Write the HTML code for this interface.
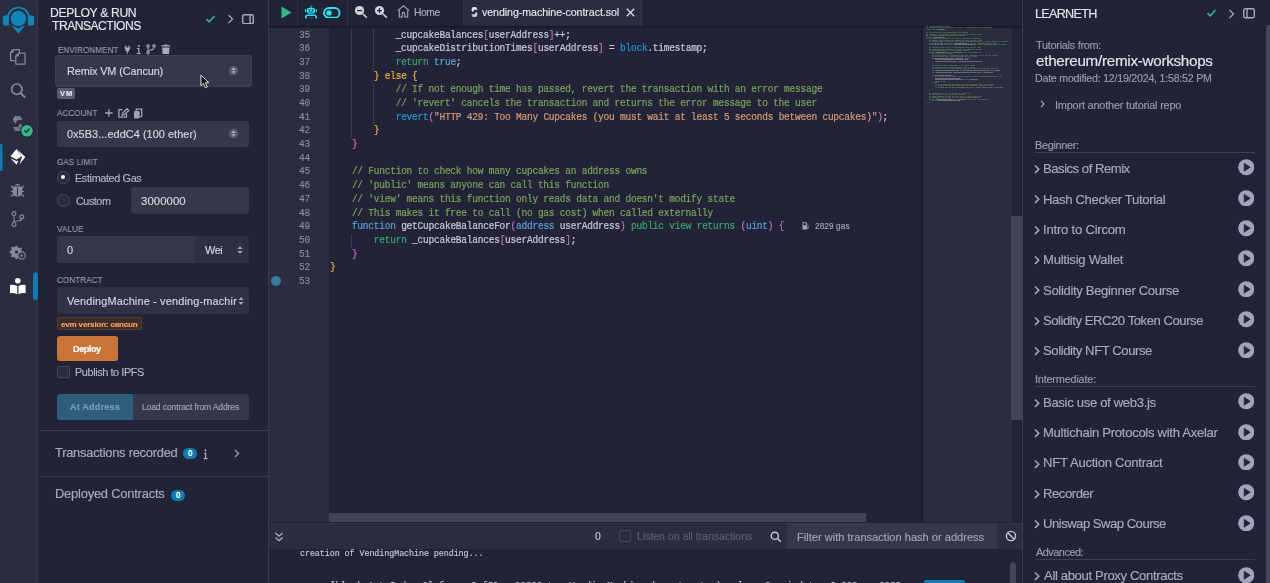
<!DOCTYPE html>
<html><head><meta charset="utf-8">
<style>
*{box-sizing:border-box;margin:0;padding:0}
html,body{width:1270px;height:583px;overflow:hidden;background:#222336;font-family:"Liberation Sans",sans-serif;color:#babbcc;-webkit-font-smoothing:antialiased}
.txt,.code,.ln{will-change:transform}
.abs{position:absolute}
#iconbar{left:0;top:0;width:38px;height:583px;background:#2a2c3f;border-right:1px solid #363a4f}
#side{left:38px;top:0;width:231px;height:583px;background:#222336;border-right:1px solid #363a4f}
#main{left:269px;top:0;width:754px;height:583px;background:#222336;border-right:1px solid #363a4f}
#right{left:1023px;top:0;width:247px;height:583px;background:#222336}
.lbl{position:absolute;font-size:9px;color:#8f90a6;letter-spacing:0.1px}
.sel{position:absolute;background:#353849;border-radius:3px;color:#dcdde6;font-size:11.5px}
.txt{position:absolute;white-space:pre;-webkit-text-stroke:0.15px currentColor}
.code{position:absolute;left:330px;font-family:"Liberation Mono",monospace;font-size:9.5px;letter-spacing:-0.23px;white-space:pre;color:#c9cad7;-webkit-text-stroke:0.2px currentColor;transform:scaleY(1.1);transform-origin:0 9.4px}
.ln{position:absolute;left:269px;width:41px;text-align:right;font-family:"Liberation Mono",monospace;font-size:9.5px;letter-spacing:-0.23px;color:#8e8fa3;transform:scaleY(1.14);transform-origin:0 9.4px;-webkit-text-stroke:0.1px currentColor}
.c{color:#7aa35c}.k{color:#3ba66b}.b{color:#5a9fd4}.p{color:#c26fc9}.y{color:#e8b339}.s{color:#d19a7a}.rv{color:#1e9ad0}
</style></head><body>
<div id="iconbar" class="abs"></div>
<div id="side" class="abs"></div>
<div id="main" class="abs"></div>
<div id="right" class="abs"></div>
<!-- ICON BAR -->
<svg class="abs" style="left:0;top:0" width="37" height="37" viewBox="0 0 37 37">
 <defs><clipPath id="shc"><path d="M0 0 H37 V23.2 L18.4 26.8 L0 23.2 Z"/></clipPath></defs>
 <g fill="#0f86b8">
  <path d="M6.74 19.32 A11.7 11.7 0 1 1 30.06 19.32 L28.06 19.15 A9.7 9.7 0 1 0 8.74 19.15 Z"/>
  <path d="M2.8 17.6 Q2.8 15.6 4.8 15.6 L8.9 15.6 L8.9 25.4 L4.8 25.4 Q2.8 25.4 2.8 23.4 Z"/>
  <path d="M27.9 15.6 L32 15.6 Q34.1 15.6 34.1 17.6 L34.1 23.4 Q34.1 25.4 32 25.4 L27.9 25.4 Z"/>
  <path d="M26.40 18.50 L25.61 19.64 L26.01 20.97 L24.90 21.81 L24.87 23.20 L23.56 23.66 L23.10 24.97 L21.71 25.00 L20.87 26.11 L19.54 25.71 L18.40 26.50 L17.26 25.71 L15.93 26.11 L15.09 25.00 L13.70 24.97 L13.24 23.66 L11.93 23.20 L11.90 21.81 L10.79 20.97 L11.19 19.64 L10.40 18.50 L11.19 17.36 L10.79 16.03 L11.90 15.19 L11.93 13.80 L13.24 13.34 L13.70 12.03 L15.09 12.00 L15.93 10.89 L17.26 11.29 L18.40 10.50 L19.54 11.29 L20.87 10.89 L21.71 12.00 L23.10 12.03 L23.56 13.34 L24.87 13.80 L24.90 15.19 L26.01 16.03 L25.61 17.36 Z" clip-path="url(#shc)"/>
  <path d="M11.2 24.9 L18.4 28.2 L25.6 24.9 L18.4 33.7 Z"/>
 </g>
</svg>
<svg class="abs" style="left:0;top:0" width="38" height="300" viewBox="0 0 38 300">
 <!-- files -->
 <g stroke="#86879a" stroke-width="1.25" fill="none" stroke-linejoin="round">
  <path d="M13 49.6 H19.4 V53 M15.6 60.5 H10.6 V52.2 L13 49.6 V52.2 H10.6"/>
  <path d="M18.2 53.2 H25 V64 H15.8 V55.8 Z M18.2 53.2 V55.8 H15.8"/>
 </g>
 <!-- search -->
 <circle cx="16.8" cy="89.2" r="5.2" stroke="#86879a" stroke-width="1.7" fill="none"/>
 <path d="M20.6 93 L24.6 97" stroke="#86879a" stroke-width="1.9" stroke-linecap="round"/>
 <!-- solidity -->
 <path d="M15.2 115.9 L20.3 115.9 L22.6 119.9 L17.6 119.9 L15.2 124 L12.9 119.9 Z" fill="#76778b"/>
 <path d="M15.2 115.9 L17.6 119.9 L12.9 119.9 Z" fill="#8a8b9e"/>
 <path d="M20.3 131 L15.2 131 L12.9 127 L17.9 127 L20.3 122.9 L22.6 127 Z" fill="#76778b"/>
 <path d="M20.3 131 L17.9 127 L22.6 127 Z" fill="#606174"/>
 <circle cx="27" cy="130.8" r="6.6" fill="#1f2030"/><circle cx="27" cy="130.8" r="5.8" fill="#32ba89"/>
 <path d="M24.4 130.4 L26.3 132.2 L29.5 128.8" stroke="#1d2233" stroke-width="1.4" fill="none"/>
 <!-- active indicator -->
 <rect x="0" y="144" width="2.5" height="27" rx="1" fill="#0e7cb0"/>
 <!-- deploy -->
 <g fill="#ffffff">
  <path d="M16.5 149 L21.5 156.5 L16.5 159.5 L10.5 156.3 Z"/>
  <path d="M17.5 149.8 L25.3 157 L19.5 164.6 L22 157 Z"/>
  <path d="M10.5 158 L16.5 161.3 L18.5 160.3 L16.5 164.8 Z"/>
 </g>
 <!-- bug -->
 <g fill="#86879a">
  <path d="M14.6 185.5 A3.4 3 0 0 1 20.4 185.5 Z"/>
  <path d="M13.6 186.6 H21.4 Q22.4 186.6 22.4 188 V192 Q22.4 196.6 17.5 196.6 Q12.6 196.6 12.6 192 V188 Q12.6 186.6 13.6 186.6Z"/>
 </g>
 <g stroke="#86879a" stroke-width="1.2">
  <path d="M11 186 L13.5 188 M24 186 L21.5 188 M10.8 191.5 H13 M24.2 191.5 H22 M11 196.5 L13.5 194.5 M24 196.5 L21.5 194.5"/>
 </g>
 <path d="M17.5 187.5 V196" stroke="#2a2c3f" stroke-width="1"/>
 <!-- git -->
 <g stroke="#86879a" stroke-width="1.2" fill="none">
  <circle cx="14" cy="213.6" r="1.9"/>
  <circle cx="14" cy="224.4" r="1.9"/>
  <circle cx="21.8" cy="216.7" r="1.9"/>
  <path d="M14 215.5 V222.5 M21.8 218.6 Q21.8 221 17.5 221 L14 221.5"/>
 </g>
 <!-- gear play -->
 <g fill="#86879a">
  <path d="M15.5 246 h2 l0.4 1.6 1.4 0.6 1.4-0.9 1.4 1.4 -0.9 1.4 0.6 1.4 1.6 0.4 v1.2 A4.5 4.5 0 0 0 19.5 256.6 l-0.2 0.1 -1.4 0.6 -0.4 1.6 h-2 l-0.4-1.6 -1.4-0.6 -1.4 0.9 -1.4-1.4 0.9-1.4 -0.6-1.4 -1.6-0.4 v-2 l1.6-0.4 0.6-1.4 -0.9-1.4 1.4-1.4 1.4 0.9 1.4-0.6z"/>
 </g>
 <circle cx="16.5" cy="252" r="1.6" fill="#2a2c3f"/>
 <circle cx="21.6" cy="255.5" r="3.6" stroke="#86879a" stroke-width="1.2" fill="#2a2c3f"/>
 <path d="M20.6 253.7 L23.4 255.5 L20.6 257.3 Z" fill="#86879a"/>
 <!-- book -->
 <g fill="#ffffff">
  <circle cx="17.8" cy="280.8" r="2.8"/>
  <path d="M10 285 Q13.5 284 17.2 286 V294.2 Q13.5 292.5 10 293.2 Z"/>
  <path d="M25.6 285 Q22 284 18.4 286 V294.2 Q22 292.5 25.6 293.2 Z"/>
 </g>
 <rect x="33" y="272.3" width="5" height="27.7" rx="2.3" fill="#0e7cb0"/>
</svg>

<!-- SIDE PANEL -->
<svg class="abs" style="left:204.6px;top:14px" width="11" height="10" viewBox="0 0 11 10"><path d="M1.5 5.2 L4.2 7.8 L9.5 2" stroke="#32ba89" stroke-width="1.6" fill="none"/></svg>
<svg class="abs" style="left:226.6px;top:13.6px" width="7" height="10" viewBox="0 0 7 10"><path d="M1.5 1 L5.5 5 L1.5 9" stroke="#a2a3bd" stroke-width="1.3" fill="none"/></svg>
<svg class="abs" style="left:241.6px;top:13.5px" width="12" height="10.5" viewBox="0 0 12 10.5"><rect x="0.7" y="0.7" width="10.6" height="9.1" rx="1.6" stroke="#a9aac2" stroke-width="1.4" fill="none"/><line x1="8.1" y1="1" x2="8.1" y2="9.5" stroke="#a9aac2" stroke-width="1.4"/></svg>

<svg class="abs" style="left:124px;top:44px" width="50" height="11" viewBox="0 0 50 11"><g fill="#a9aac2"><rect x="1.1" y="1.6" width="1.2" height="2.2"/><rect x="4.3" y="1.6" width="1.2" height="2.2"/><path d="M0.3 3.6 H6.6 L4.5 7.8 H2.4 Z"/><rect x="2.9" y="7.6" width="0.9" height="2.2"/><circle cx="14.8" cy="2" r="1"/></g><path d="M12.9 4.5 H14.8 V9.3 M12.7 9.5 H16.9" stroke="#a9aac2" stroke-width="1.2" fill="none"/><g stroke="#a9aac2" stroke-width="1.05" fill="none"><circle cx="24.1" cy="2.1" r="1.25"/><circle cx="30" cy="2.1" r="1.25"/><circle cx="24.1" cy="8.6" r="1.25"/><path d="M24.1 3.4 V7.3 M30 3.4 Q30 6 25 6.2"/></g><g fill="#a9aac2"><path d="M37.4 1.3 H46.2 V2.5 H37.4 Z M40.3 0.5 H43.3 V1.4 H40.3 Z M38.1 3.4 H45.5 L45 10 H38.6 Z"/></g></svg>
<div class="sel" style="left:55px;top:55.4px;width:196.5px;height:31.4px;border:1px solid #3e4155;background:#363849"></div>
<svg class="abs" style="left:228.1px;top:65.2px" width="11.2" height="11.2" viewBox="0 0 11.2 11.2"><circle cx="5.6" cy="5.6" r="5" fill="#585b76" stroke="#2f3246" stroke-width="0.6"/><path d="M3.5 4.9 L5.6 2.6 L7.7 4.9 Z M3.5 6.3 L5.6 8.6 L7.7 6.3 Z" fill="#b3b5cf"/></svg>
<div class="abs" style="left:57px;top:87.8px;width:18px;height:10.8px;background:#595c76;border-radius:2px"></div>

<svg class="abs" style="left:104px;top:108px" width="40" height="11" viewBox="0 0 40 11"><g stroke="#a2a3bd" stroke-width="1.3" fill="none"><path d="M4.9 1.2v7.6 M1.1 5h7.6"/><path d="M22.5 5.8v3.4h-7.6v-7.6h3.6"/><path d="M18.2 7.2l0.5-2.2 4.3-4.3 1.7 1.7-4.3 4.3z"/></g><g fill="#a2a3bd"><rect x="30" y="3" width="5.6" height="7.4" rx="1"/></g><path d="M32.3 2.8V1.2h5.4v7.4h-1.8" stroke="#a2a3bd" stroke-width="1.3" fill="none"/></svg>
<div class="sel" style="left:57px;top:121px;width:192px;height:26px;background:#353849"></div>
<svg class="abs" style="left:228.3px;top:127.9px" width="11.2" height="11.2" viewBox="0 0 11.2 11.2"><circle cx="5.6" cy="5.6" r="5" fill="#585b76" stroke="#2f3246" stroke-width="0.6"/><path d="M3.5 4.9 L5.6 2.6 L7.7 4.9 Z M3.5 6.3 L5.6 8.6 L7.7 6.3 Z" fill="#b3b5cf"/></svg>

<div class="abs" style="left:57px;top:171px;width:12.5px;height:12.5px;border-radius:50%;border:1px solid #44465c;background:#292b3e"></div>
<div class="abs" style="left:61.2px;top:175.2px;width:4.2px;height:4.2px;border-radius:50%;background:#fff"></div>
<div class="abs" style="left:57px;top:194px;width:12.5px;height:12.5px;border-radius:50%;border:1px solid #44465c;background:#292b3e"></div>
<div class="sel" style="left:131px;top:187px;width:118px;height:27px"></div>

<div class="sel" style="left:57px;top:236px;width:138px;height:27px;border-radius:3px 0 0 3px"></div>
<div class="sel" style="left:195px;top:236px;width:54px;height:27px;border-radius:0 3px 3px 0;background:#2d2f42"></div>
<svg class="abs" style="left:237px;top:245px" width="6" height="10" viewBox="0 0 6 10"><path d="M0.5 4L3 1 5.5 4z M0.5 6L3 9 5.5 6z" fill="#a2a3bd"/></svg>

<div class="sel" style="left:57px;top:287px;width:192px;height:27px;background:#2f3145"></div>

<div class="abs" style="left:57px;top:317px;width:85px;height:13px;background:#3f2d2c;border:1px solid #5a3a30;border-radius:2px"></div>
<div class="abs" style="left:57px;top:336px;width:61px;height:24.5px;background:#c97539;border-radius:3px"></div>
<div class="abs" style="left:57px;top:365.5px;width:12.5px;height:12.5px;border-radius:2px;border:1px solid #44465c;background:#2a2c3f"></div>

<div class="abs" style="left:57px;top:394px;width:76px;height:25.5px;background:#2f5e7a;border-radius:3px 0 0 3px"></div>
<div class="abs" style="left:133px;top:394px;width:116px;height:25.5px;background:#353849;border-radius:0 3px 3px 0"></div>

<div class="abs" style="left:39px;top:430px;width:229px;height:1px;background:#363a4f"></div>
<div class="abs" style="left:183px;top:448px;width:14px;height:11px;border-radius:6px;background:#0e7cb0;color:#fff;font-size:8.5px;font-weight:bold;text-align:center;line-height:11.5px">0</div>
<svg class="abs" style="left:203px;top:449px" width="5" height="10.5" viewBox="0 0 5 10.5"><circle cx="2.5" cy="1.2" r="1" fill="#a9aac2"/><path d="M1.1 4.2 H2.6 V9.3 M0.5 9.6 H4.5" stroke="#a9aac2" stroke-width="1.25" fill="none"/></svg>
<svg class="abs" style="left:234px;top:449px" width="6" height="9" viewBox="0 0 6 9"><path d="M1 1 L4.5 4.5 L1 8" stroke="#a2a3bd" stroke-width="1.2" fill="none"/></svg>
<div class="abs" style="left:39px;top:476px;width:229px;height:1px;background:#363a4f"></div>
<div class="abs" style="left:171px;top:489.5px;width:14px;height:11px;border-radius:6px;background:#0e7cb0;color:#fff;font-size:8.5px;font-weight:bold;text-align:center;line-height:11.5px">0</div>

<div class="txt" style="left:49.90px;top:6.50px;font-size:12.2px;line-height:12.2px;color:#e4e5ed;letter-spacing:-0.355px">DEPLOY &amp; RUN</div>
<div class="txt" style="left:51.70px;top:19.90px;font-size:12.2px;line-height:12.2px;color:#e4e5ed;letter-spacing:-0.555px">TRANSACTIONS</div>
<div class="txt" style="left:57.60px;top:46.00px;font-size:8.6px;line-height:8.6px;color:#9a9bb0;letter-spacing:0.150px;transform:scaleX(0.9277);transform-origin:0.00px 0">ENVIRONMENT</div>
<div class="txt" style="left:66.80px;top:65.80px;font-size:10.9px;line-height:10.9px;color:#d6d7e2;letter-spacing:-0.113px">Remix VM (Cancun)</div>
<div class="txt" style="left:60.30px;top:90.20px;font-size:7.5px;line-height:7.5px;color:#e8e8f0;font-weight:700;letter-spacing:1.000px">VM</div>
<div class="txt" style="left:57.40px;top:109.00px;font-size:8.6px;line-height:8.6px;color:#9a9bb0;letter-spacing:0.150px;transform:scaleX(0.9295);transform-origin:0.00px 0">ACCOUNT</div>
<div class="txt" style="left:67.40px;top:129.20px;font-size:10.9px;line-height:10.9px;color:#d6d7e2;letter-spacing:0.058px">0x5B3...eddC4 (100 ether)</div>
<div class="txt" style="left:57.10px;top:157.60px;font-size:8.6px;line-height:8.6px;color:#9a9bb0;letter-spacing:0.150px;transform:scaleX(0.9295);transform-origin:0.00px 0">GAS LIMIT</div>
<div class="txt" style="left:74.70px;top:172.50px;font-size:10.8px;line-height:10.8px;color:#b4b5c7;letter-spacing:-0.342px">Estimated Gas</div>
<div class="txt" style="left:75.70px;top:196.10px;font-size:10.8px;line-height:10.8px;color:#b4b5c7;letter-spacing:-0.460px">Custom</div>
<div class="txt" style="left:140.60px;top:196.10px;font-size:11.4px;line-height:11.4px;color:#d6d7e2;letter-spacing:0.050px">3000000</div>
<div class="txt" style="left:57.10px;top:224.50px;font-size:8.6px;line-height:8.6px;color:#9a9bb0;letter-spacing:0.150px;transform:scaleX(0.9393);transform-origin:0.00px 0">VALUE</div>
<div class="txt" style="left:66.50px;top:244.60px;font-size:10.9px;line-height:10.9px;color:#d6d7e2">0</div>
<div class="txt" style="left:205.10px;top:244.60px;font-size:10.9px;line-height:10.9px;color:#d6d7e2;letter-spacing:-0.450px">Wei</div>
<div class="txt" style="left:57.10px;top:275.90px;font-size:8.6px;line-height:8.6px;color:#9a9bb0;letter-spacing:0.150px;transform:scaleX(0.9327);transform-origin:0.00px 0">CONTRACT</div>
<div class="txt" style="left:61.00px;top:320.70px;font-size:8.0px;line-height:8.0px;color:#eea06a;font-weight:700;letter-spacing:-0.161px">evm version: cancun</div>
<div class="txt" style="left:73.30px;top:344.50px;font-size:9.2px;line-height:9.2px;color:#ffffff;font-weight:700;letter-spacing:-0.500px">Deploy</div>
<div class="txt" style="left:74.60px;top:366.60px;font-size:10.9px;line-height:10.9px;color:#b4b5c7;letter-spacing:-0.414px">Publish to IPFS</div>
<div class="txt" style="left:70.40px;top:403.40px;font-size:9.0px;line-height:9.0px;color:#7d9fb6;font-weight:700;letter-spacing:0.233px">At Address</div>
<div class="txt" style="left:142.40px;top:403.40px;font-size:8.5px;line-height:8.5px;color:#a3a4b8;letter-spacing:-0.104px">Load contract from Addres</div>
<div class="txt" style="left:55.00px;top:447.10px;font-size:12.9px;line-height:12.9px;color:#a9aabe;letter-spacing:-0.250px">Transactions recorded</div>
<div class="txt" style="left:55.00px;top:488.30px;font-size:12.9px;line-height:12.9px;color:#a9aabe;letter-spacing:-0.206px">Deployed Contracts</div>
<div class="txt" style="left:67.30px;top:295.60px;font-size:10.9px;line-height:10.9px;color:#d6d7e2;letter-spacing:0.170px">VendingMachine - vending-machin</div>
<div class="abs" style="left:237px;top:288px;width:12px;height:25px;background:#2f3145;border-radius:0 3px 3px 0"></div>
<svg class="abs" style="left:237.5px;top:296px" width="6" height="10" viewBox="0 0 6 10"><path d="M0.5 4L3 1 5.5 4z M0.5 6L3 9 5.5 6z" fill="#a2a3bd"/></svg>
<svg class="abs" style="left:200.2px;top:74px" width="11" height="15" viewBox="0 0 12 16"><path d="M1 1 L1 12.6 L3.7 10.1 L5.8 14.8 L7.9 13.9 L5.9 9.3 L9.6 9.3 Z" fill="#111" stroke="#f2f2f2" stroke-width="1" stroke-linejoin="round"/></svg>

<!-- MAIN: tab bar -->
<div class="abs" style="left:269px;top:0;width:753px;height:27px;background:#212233;border-bottom:1px solid #161722"></div>
<svg class="abs" style="left:281px;top:6px" width="11" height="13" viewBox="0 0 11 13"><path d="M0.5 0.5 L10.5 6.5 L0.5 12.5 Z" fill="#32ba89"/></svg>
<div class="abs" style="left:297px;top:0;width:1px;height:26px;background:#2e3043"></div>
<svg class="abs" style="left:304px;top:5px" width="14" height="14" viewBox="0 0 14 14"><g fill="#2ae0f2"><rect x="6.5" y="0.6" width="1" height="2.4"/><rect x="2.8" y="2.7" width="8.4" height="6" rx="2.4"/><rect x="1" y="4.2" width="1.2" height="3"/><rect x="11.8" y="4.2" width="1.2" height="3"/></g><g fill="#222336"><rect x="4.6" y="4.4" width="1.6" height="1.3"/><rect x="7.8" y="4.4" width="1.6" height="1.3"/><rect x="4.8" y="6.6" width="4.4" height="0.8"/></g><path d="M1.8 13.6 V12 Q1.8 10.2 3.8 10.2 H10.2 Q12.2 10.2 12.2 12 V13.6" stroke="#2ae0f2" stroke-width="1.6" fill="none"/><rect x="5" y="12.4" width="4" height="1" fill="#3a5a70"/></svg>
<svg class="abs" style="left:323.3px;top:6.6px" width="17.6" height="11.8" viewBox="0 0 17.6 11.8"><rect x="1" y="1" width="15.6" height="9.8" rx="4.9" stroke="#2ae0f2" stroke-width="1.9" fill="none"/><circle cx="6" cy="5.9" r="2.7" fill="#2ae0f2"/></svg>
<div class="abs" style="left:347px;top:0;width:1px;height:26px;background:#2e3043"></div>
<svg class="abs" style="left:354px;top:5.3px" width="14" height="14" viewBox="0 0 14 14"><circle cx="5.5" cy="5.5" r="4.6" fill="#d2d3de"/><rect x="3" y="5" width="5" height="1.2" fill="#222336"/><path d="M8.8 8.8 L12.8 12.8" stroke="#d2d3de" stroke-width="1.6"/></svg>
<svg class="abs" style="left:374px;top:5.3px" width="14" height="14" viewBox="0 0 14 14"><circle cx="5.5" cy="5.5" r="4.6" fill="#d2d3de"/><rect x="3" y="5" width="5" height="1.2" fill="#222336"/><rect x="4.9" y="3" width="1.2" height="5" fill="#222336"/><path d="M8.8 8.8 L12.8 12.8" stroke="#d2d3de" stroke-width="1.6"/></svg>
<svg class="abs" style="left:397px;top:5px" width="13" height="13" viewBox="0 0 13 13"><path d="M0.8 5.6 L6.5 0.8 L12.2 5.6" stroke="#a9aabe" stroke-width="1.1" fill="none"/><path d="M2.3 5.2 V12 H5.2 V8.6 Q5.2 7.4 6.5 7.4 Q7.8 7.4 7.8 8.6 V12 H10.7 V5.2" stroke="#a9aabe" stroke-width="1.1" fill="none"/></svg>
<div class="abs" style="left:463px;top:0;width:179px;height:26px;background:#2a2c3f;border-left:1px solid #30334a;border-right:1px solid #33374c"></div>
<svg class="abs" style="left:470.5px;top:7.4px" width="7" height="10" viewBox="0 0 9.8 15.2"><path d="M2.3 0 L7.4 0 L9.7 4 L4.7 4 L2.3 8.1 L0 4 Z" fill="#e0e1ea"/><path d="M7.4 15.1 L2.3 15.1 L0 11.1 L5 11.1 L7.4 7 L9.7 11.1 Z" fill="#c8c9d6"/></svg>
<svg class="abs" style="left:626px;top:8px" width="9" height="9" viewBox="0 0 9 9"><path d="M0.8 0.8 L8.2 8.2 M8.2 0.8 L0.8 8.2" stroke="#d6d7e0" stroke-width="1.4"/></svg>

<!-- gutter -->
<div class="abs" style="left:269px;top:27px;width:60.3px;height:496px;background:#2a2c3f"></div>
<div class="abs" style="left:351px;top:27px;width:1px;height:111px;background:#393b50"></div>
<div class="abs" style="left:351px;top:234px;width:1px;height:13.7px;background:#393b50"></div>
<div class="abs" style="left:373px;top:27px;width:1px;height:42.6px;background:#393b50"></div>
<div class="abs" style="left:373px;top:83.3px;width:1px;height:41px;background:#393b50"></div>
<div class="abs" style="left:271px;top:276px;width:10px;height:10px;border-radius:50%;background:#3a7a9a"></div>

<div class="ln" style="top:28.55px;line-height:13.69px">35</div>
<div class="code" style="top:28.55px;line-height:13.69px">            _cupcakeBalances<span class="p">[</span>userAddress<span class="p">]</span>++;</div>
<div class="ln" style="top:42.24px;line-height:13.69px">36</div>
<div class="code" style="top:42.24px;line-height:13.69px">            _cupcakeDistributionTimes<span class="p">[</span>userAddress<span class="p">]</span> = <span class="rv">block</span>.timestamp;</div>
<div class="ln" style="top:55.93px;line-height:13.69px">37</div>
<div class="code" style="top:55.93px;line-height:13.69px">            <span class="k">return</span> <span class="b">true</span>;</div>
<div class="ln" style="top:69.62px;line-height:13.69px">38</div>
<div class="code" style="top:69.62px;line-height:13.69px">        <span class="y">} else {</span></div>
<div class="ln" style="top:83.31px;line-height:13.69px">39</div>
<div class="code" style="top:83.31px;line-height:13.69px">            <span class="c">// If not enough time has passed, revert the transaction with an error message</span></div>
<div class="ln" style="top:97.00px;line-height:13.69px">40</div>
<div class="code" style="top:97.00px;line-height:13.69px">            <span class="c">// 'revert' cancels the transaction and returns the error message to the user</span></div>
<div class="ln" style="top:110.69px;line-height:13.69px">41</div>
<div class="code" style="top:110.69px;line-height:13.69px">            <span class="rv">revert</span><span class="p">(</span><span class="s">"HTTP 429: Too Many Cupcakes (you must wait at least 5 seconds between cupcakes)"</span><span class="p">)</span>;</div>
<div class="ln" style="top:124.38px;line-height:13.69px">42</div>
<div class="code" style="top:124.38px;line-height:13.69px">        <span class="y">}</span></div>
<div class="ln" style="top:138.07px;line-height:13.69px">43</div>
<div class="code" style="top:138.07px;line-height:13.69px">    <span class="p">}</span></div>
<div class="ln" style="top:151.76px;line-height:13.69px">44</div>
<div class="ln" style="top:165.45px;line-height:13.69px">45</div>
<div class="code" style="top:165.45px;line-height:13.69px">    <span class="c">// Function to check how many cupcakes an address owns</span></div>
<div class="ln" style="top:179.14px;line-height:13.69px">46</div>
<div class="code" style="top:179.14px;line-height:13.69px">    <span class="c">// 'public' means anyone can call this function</span></div>
<div class="ln" style="top:192.83px;line-height:13.69px">47</div>
<div class="code" style="top:192.83px;line-height:13.69px">    <span class="c">// 'view' means this function only reads data and doesn't modify state</span></div>
<div class="ln" style="top:206.52px;line-height:13.69px">48</div>
<div class="code" style="top:206.52px;line-height:13.69px">    <span class="c">// This makes it free to call (no gas cost) when called externally</span></div>
<div class="ln" style="top:220.21px;line-height:13.69px">49</div>
<div class="code" style="top:220.21px;line-height:13.69px">    <span class="b">function</span> getCupcakeBalanceFor<span class="p">(</span><span class="b">address</span> userAddress<span class="p">)</span> <span class="k">public</span> <span class="k">view</span> <span class="k">returns</span> <span class="p">(</span><span class="b">uint</span><span class="p">)</span> <span class="p">{</span></div>
<div class="ln" style="top:233.90px;line-height:13.69px">50</div>
<div class="code" style="top:233.90px;line-height:13.69px">        <span class="k">return</span> _cupcakeBalances<span class="p">[</span>userAddress<span class="p">]</span>;</div>
<div class="ln" style="top:247.59px;line-height:13.69px">51</div>
<div class="code" style="top:247.59px;line-height:13.69px">    <span class="p">}</span></div>
<div class="ln" style="top:261.28px;line-height:13.69px">52</div>
<div class="code" style="top:261.28px;line-height:13.69px"><span class="y">}</span></div>
<div class="ln" style="top:274.97px;line-height:13.69px">53</div>
<svg class="abs" style="left:802px;top:222px" width="7" height="8" viewBox="0 0 7 8"><path d="M0.5 7.5V1a0.7 0.7 0 0 1 0.7-0.7h3a0.7 0.7 0 0 1 0.7 0.7v6.5z" fill="#a2a3bd"/><rect x="1.3" y="1.2" width="2.7" height="2" fill="#222336"/><path d="M4.9 2.5 L6.3 3.6 V6.2 a0.5 0.5 0 0 1 -1 0 V4.8" stroke="#a2a3bd" stroke-width="0.7" fill="none"/></svg>

<div class="abs" style="left:922px;top:27px;width:89px;height:496px;background:#2a2c3f"></div>
<div class="abs" style="left:921px;top:27px;width:1.6px;height:496px;background:#1a1b27"></div>
<div class="abs" style="left:1011px;top:27px;width:12px;height:496px;background:#222336;border-left:1px solid #2c2f43;border-right:1px solid #363a4f"></div>
<div class="abs" style="left:1011px;top:215.5px;width:12px;height:204px;background:#434556"></div>
<div class="abs" style="left:329.3px;top:513px;width:536.7px;height:9px;background:#434556"></div>

<div class="abs" style="left:269px;top:27px;width:753px;height:2px;background:linear-gradient(#15162180,#15162100)"></div>

<div class="abs" style="left:926.30px;top:25.90px;width:1.50px;height:1px;background:#7aa35c;opacity:0.38"></div>
<div class="abs" style="left:928.55px;top:25.90px;width:18.00px;height:1px;background:#7aa35c;opacity:0.38"></div>
<div class="abs" style="left:947.30px;top:25.90px;width:2.25px;height:1px;background:#7aa35c;opacity:0.38"></div>
<div class="abs" style="left:926.30px;top:27.42px;width:1.50px;height:1px;background:#7aa35c;opacity:0.38"></div>
<div class="abs" style="left:928.55px;top:27.42px;width:6.00px;height:1px;background:#7aa35c;opacity:0.38"></div>
<div class="abs" style="left:935.30px;top:27.42px;width:5.25px;height:1px;background:#7aa35c;opacity:0.38"></div>
<div class="abs" style="left:941.30px;top:27.42px;width:3.00px;height:1px;background:#7aa35c;opacity:0.38"></div>
<div class="abs" style="left:945.05px;top:27.42px;width:1.50px;height:1px;background:#7aa35c;opacity:0.38"></div>
<div class="abs" style="left:947.30px;top:27.42px;width:5.25px;height:1px;background:#7aa35c;opacity:0.38"></div>
<div class="abs" style="left:953.30px;top:27.42px;width:3.00px;height:1px;background:#7aa35c;opacity:0.38"></div>
<div class="abs" style="left:957.05px;top:27.42px;width:1.50px;height:1px;background:#7aa35c;opacity:0.38"></div>
<div class="abs" style="left:959.30px;top:27.42px;width:3.75px;height:1px;background:#7aa35c;opacity:0.38"></div>
<div class="abs" style="left:963.80px;top:27.42px;width:1.50px;height:1px;background:#7aa35c;opacity:0.38"></div>
<div class="abs" style="left:966.05px;top:27.42px;width:4.50px;height:1px;background:#7aa35c;opacity:0.38"></div>
<div class="abs" style="left:971.30px;top:27.42px;width:2.25px;height:1px;background:#7aa35c;opacity:0.38"></div>
<div class="abs" style="left:974.30px;top:27.42px;width:3.00px;height:1px;background:#7aa35c;opacity:0.38"></div>
<div class="abs" style="left:978.05px;top:27.42px;width:3.00px;height:1px;background:#7aa35c;opacity:0.38"></div>
<div class="abs" style="left:981.80px;top:27.42px;width:3.75px;height:1px;background:#7aa35c;opacity:0.38"></div>
<div class="abs" style="left:986.30px;top:27.42px;width:2.25px;height:1px;background:#7aa35c;opacity:0.38"></div>
<div class="abs" style="left:989.30px;top:27.42px;width:3.00px;height:1px;background:#7aa35c;opacity:0.38"></div>
<div class="abs" style="left:926.30px;top:28.94px;width:4.50px;height:1px;background:#5a9fd4;opacity:0.38"></div>
<div class="abs" style="left:931.55px;top:28.94px;width:6.00px;height:1px;background:#5a9fd4;opacity:0.38"></div>
<div class="abs" style="left:938.30px;top:28.94px;width:0.75px;height:1px;background:#c9cad7;opacity:0.38"></div>
<div class="abs" style="left:939.05px;top:28.94px;width:0.75px;height:1px;background:#c9cad7;opacity:0.38"></div>
<div class="abs" style="left:939.80px;top:28.94px;width:0.75px;height:1px;background:#c9cad7;opacity:0.38"></div>
<div class="abs" style="left:940.55px;top:28.94px;width:0.75px;height:1px;background:#c9cad7;opacity:0.38"></div>
<div class="abs" style="left:941.30px;top:28.94px;width:0.75px;height:1px;background:#c9cad7;opacity:0.38"></div>
<div class="abs" style="left:942.05px;top:28.94px;width:0.75px;height:1px;background:#c9cad7;opacity:0.38"></div>
<div class="abs" style="left:942.80px;top:28.94px;width:0.75px;height:1px;background:#c9cad7;opacity:0.38"></div>
<div class="abs" style="left:943.55px;top:28.94px;width:0.75px;height:1px;background:#c9cad7;opacity:0.38"></div>
<div class="abs" style="left:926.30px;top:31.98px;width:1.50px;height:1px;background:#7aa35c;opacity:0.38"></div>
<div class="abs" style="left:928.55px;top:31.98px;width:5.25px;height:1px;background:#7aa35c;opacity:0.38"></div>
<div class="abs" style="left:934.55px;top:31.98px;width:0.75px;height:1px;background:#7aa35c;opacity:0.38"></div>
<div class="abs" style="left:936.05px;top:31.98px;width:6.00px;height:1px;background:#7aa35c;opacity:0.38"></div>
<div class="abs" style="left:942.80px;top:31.98px;width:3.75px;height:1px;background:#7aa35c;opacity:0.38"></div>
<div class="abs" style="left:947.30px;top:31.98px;width:10.50px;height:1px;background:#7aa35c;opacity:0.38"></div>
<div class="abs" style="left:958.55px;top:31.98px;width:2.25px;height:1px;background:#7aa35c;opacity:0.38"></div>
<div class="abs" style="left:961.55px;top:31.98px;width:6.00px;height:1px;background:#7aa35c;opacity:0.38"></div>
<div class="abs" style="left:926.30px;top:33.50px;width:1.50px;height:1px;background:#7aa35c;opacity:0.38"></div>
<div class="abs" style="left:928.55px;top:33.50px;width:0.75px;height:1px;background:#7aa35c;opacity:0.38"></div>
<div class="abs" style="left:930.05px;top:33.50px;width:6.00px;height:1px;background:#7aa35c;opacity:0.38"></div>
<div class="abs" style="left:936.80px;top:33.50px;width:1.50px;height:1px;background:#7aa35c;opacity:0.38"></div>
<div class="abs" style="left:939.05px;top:33.50px;width:0.75px;height:1px;background:#7aa35c;opacity:0.38"></div>
<div class="abs" style="left:940.55px;top:33.50px;width:7.50px;height:1px;background:#7aa35c;opacity:0.38"></div>
<div class="abs" style="left:948.80px;top:33.50px;width:1.50px;height:1px;background:#7aa35c;opacity:0.38"></div>
<div class="abs" style="left:951.05px;top:33.50px;width:6.75px;height:1px;background:#7aa35c;opacity:0.38"></div>
<div class="abs" style="left:958.55px;top:33.50px;width:2.25px;height:1px;background:#7aa35c;opacity:0.38"></div>
<div class="abs" style="left:961.55px;top:33.50px;width:3.00px;height:1px;background:#7aa35c;opacity:0.38"></div>
<div class="abs" style="left:965.30px;top:33.50px;width:3.00px;height:1px;background:#7aa35c;opacity:0.38"></div>
<div class="abs" style="left:969.05px;top:33.50px;width:4.50px;height:1px;background:#7aa35c;opacity:0.38"></div>
<div class="abs" style="left:974.30px;top:33.50px;width:3.00px;height:1px;background:#7aa35c;opacity:0.38"></div>
<div class="abs" style="left:978.05px;top:33.50px;width:3.75px;height:1px;background:#7aa35c;opacity:0.38"></div>
<div class="abs" style="left:926.30px;top:35.02px;width:1.50px;height:1px;background:#7aa35c;opacity:0.38"></div>
<div class="abs" style="left:928.55px;top:35.02px;width:1.50px;height:1px;background:#7aa35c;opacity:0.38"></div>
<div class="abs" style="left:930.80px;top:35.02px;width:0.75px;height:1px;background:#7aa35c;opacity:0.38"></div>
<div class="abs" style="left:932.30px;top:35.02px;width:6.00px;height:1px;background:#7aa35c;opacity:0.38"></div>
<div class="abs" style="left:939.05px;top:35.02px;width:5.25px;height:1px;background:#7aa35c;opacity:0.38"></div>
<div class="abs" style="left:945.05px;top:35.02px;width:1.50px;height:1px;background:#7aa35c;opacity:0.38"></div>
<div class="abs" style="left:947.30px;top:35.02px;width:2.25px;height:1px;background:#7aa35c;opacity:0.38"></div>
<div class="abs" style="left:950.30px;top:35.02px;width:6.00px;height:1px;background:#7aa35c;opacity:0.38"></div>
<div class="abs" style="left:957.05px;top:35.02px;width:7.50px;height:1px;background:#7aa35c;opacity:0.38"></div>
<div class="abs" style="left:926.30px;top:36.54px;width:6.00px;height:1px;background:#5a9fd4;opacity:0.38"></div>
<div class="abs" style="left:933.05px;top:36.54px;width:10.50px;height:1px;background:#c9cad7;opacity:0.38"></div>
<div class="abs" style="left:944.30px;top:36.54px;width:0.75px;height:1px;background:#c26fc9;opacity:0.38"></div>
<div class="abs" style="left:929.30px;top:38.06px;width:1.50px;height:1px;background:#7aa35c;opacity:0.38"></div>
<div class="abs" style="left:931.55px;top:38.06px;width:5.25px;height:1px;background:#7aa35c;opacity:0.38"></div>
<div class="abs" style="left:937.55px;top:38.06px;width:3.75px;height:1px;background:#7aa35c;opacity:0.38"></div>
<div class="abs" style="left:942.05px;top:38.06px;width:6.75px;height:1px;background:#7aa35c;opacity:0.38"></div>
<div class="abs" style="left:949.55px;top:38.06px;width:1.50px;height:1px;background:#7aa35c;opacity:0.38"></div>
<div class="abs" style="left:951.80px;top:38.06px;width:2.25px;height:1px;background:#7aa35c;opacity:0.38"></div>
<div class="abs" style="left:954.80px;top:38.06px;width:6.00px;height:1px;background:#7aa35c;opacity:0.38"></div>
<div class="abs" style="left:961.55px;top:38.06px;width:3.00px;height:1px;background:#7aa35c;opacity:0.38"></div>
<div class="abs" style="left:965.30px;top:38.06px;width:6.00px;height:1px;background:#7aa35c;opacity:0.38"></div>
<div class="abs" style="left:972.05px;top:38.06px;width:1.50px;height:1px;background:#7aa35c;opacity:0.38"></div>
<div class="abs" style="left:974.30px;top:38.06px;width:6.75px;height:1px;background:#7aa35c;opacity:0.38"></div>
<div class="abs" style="left:929.30px;top:39.58px;width:1.50px;height:1px;background:#7aa35c;opacity:0.38"></div>
<div class="abs" style="left:931.55px;top:39.58px;width:6.75px;height:1px;background:#7aa35c;opacity:0.38"></div>
<div class="abs" style="left:939.05px;top:39.58px;width:3.75px;height:1px;background:#7aa35c;opacity:0.38"></div>
<div class="abs" style="left:943.55px;top:39.58px;width:3.00px;height:1px;background:#7aa35c;opacity:0.38"></div>
<div class="abs" style="left:947.30px;top:39.58px;width:3.00px;height:1px;background:#7aa35c;opacity:0.38"></div>
<div class="abs" style="left:951.05px;top:39.58px;width:3.00px;height:1px;background:#7aa35c;opacity:0.38"></div>
<div class="abs" style="left:954.80px;top:39.58px;width:6.00px;height:1px;background:#7aa35c;opacity:0.38"></div>
<div class="abs" style="left:961.55px;top:39.58px;width:2.25px;height:1px;background:#7aa35c;opacity:0.38"></div>
<div class="abs" style="left:964.55px;top:39.58px;width:4.50px;height:1px;background:#7aa35c;opacity:0.38"></div>
<div class="abs" style="left:969.80px;top:39.58px;width:2.25px;height:1px;background:#7aa35c;opacity:0.38"></div>
<div class="abs" style="left:972.80px;top:39.58px;width:3.00px;height:1px;background:#7aa35c;opacity:0.38"></div>
<div class="abs" style="left:976.55px;top:39.58px;width:1.50px;height:1px;background:#7aa35c;opacity:0.38"></div>
<div class="abs" style="left:978.80px;top:39.58px;width:3.00px;height:1px;background:#7aa35c;opacity:0.38"></div>
<div class="abs" style="left:929.30px;top:41.10px;width:1.50px;height:1px;background:#7aa35c;opacity:0.38"></div>
<div class="abs" style="left:931.55px;top:41.10px;width:0.75px;height:1px;background:#7aa35c;opacity:0.38"></div>
<div class="abs" style="left:933.05px;top:41.10px;width:5.25px;height:1px;background:#7aa35c;opacity:0.38"></div>
<div class="abs" style="left:939.05px;top:41.10px;width:1.50px;height:1px;background:#7aa35c;opacity:0.38"></div>
<div class="abs" style="left:941.30px;top:41.10px;width:3.00px;height:1px;background:#7aa35c;opacity:0.38"></div>
<div class="abs" style="left:945.05px;top:41.10px;width:0.75px;height:1px;background:#7aa35c;opacity:0.38"></div>
<div class="abs" style="left:946.55px;top:41.10px;width:7.50px;height:1px;background:#7aa35c;opacity:0.38"></div>
<div class="abs" style="left:954.80px;top:41.10px;width:3.00px;height:1px;background:#7aa35c;opacity:0.38"></div>
<div class="abs" style="left:958.55px;top:41.10px;width:3.00px;height:1px;background:#7aa35c;opacity:0.38"></div>
<div class="abs" style="left:962.30px;top:41.10px;width:3.00px;height:1px;background:#7aa35c;opacity:0.38"></div>
<div class="abs" style="left:966.05px;top:41.10px;width:1.50px;height:1px;background:#7aa35c;opacity:0.38"></div>
<div class="abs" style="left:968.30px;top:41.10px;width:2.25px;height:1px;background:#7aa35c;opacity:0.38"></div>
<div class="abs" style="left:971.30px;top:41.10px;width:3.00px;height:1px;background:#7aa35c;opacity:0.38"></div>
<div class="abs" style="left:975.05px;top:41.10px;width:1.50px;height:1px;background:#7aa35c;opacity:0.38"></div>
<div class="abs" style="left:977.30px;top:41.10px;width:4.50px;height:1px;background:#7aa35c;opacity:0.38"></div>
<div class="abs" style="left:982.55px;top:41.10px;width:1.50px;height:1px;background:#7aa35c;opacity:0.38"></div>
<div class="abs" style="left:984.80px;top:41.10px;width:5.25px;height:1px;background:#7aa35c;opacity:0.38"></div>
<div class="abs" style="left:990.80px;top:41.10px;width:3.75px;height:1px;background:#7aa35c;opacity:0.38"></div>
<div class="abs" style="left:995.30px;top:41.10px;width:3.00px;height:1px;background:#7aa35c;opacity:0.38"></div>
<div class="abs" style="left:999.05px;top:41.10px;width:0.75px;height:1px;background:#7aa35c;opacity:0.38"></div>
<div class="abs" style="left:1000.55px;top:41.10px;width:3.00px;height:1px;background:#7aa35c;opacity:0.38"></div>
<div class="abs" style="left:1004.30px;top:41.10px;width:3.75px;height:1px;background:#7aa35c;opacity:0.38"></div>
<div class="abs" style="left:929.30px;top:42.62px;width:5.25px;height:1px;background:#5a9fd4;opacity:0.38"></div>
<div class="abs" style="left:934.55px;top:42.62px;width:0.75px;height:1px;background:#c26fc9;opacity:0.38"></div>
<div class="abs" style="left:935.30px;top:42.62px;width:5.25px;height:1px;background:#5a9fd4;opacity:0.38"></div>
<div class="abs" style="left:941.30px;top:42.62px;width:0.75px;height:1px;background:#c9cad7;opacity:0.38"></div>
<div class="abs" style="left:942.05px;top:42.62px;width:0.75px;height:1px;background:#c9cad7;opacity:0.38"></div>
<div class="abs" style="left:943.55px;top:42.62px;width:3.00px;height:1px;background:#5a9fd4;opacity:0.38"></div>
<div class="abs" style="left:946.55px;top:42.62px;width:0.75px;height:1px;background:#c26fc9;opacity:0.38"></div>
<div class="abs" style="left:948.05px;top:42.62px;width:5.25px;height:1px;background:#3ba66b;opacity:0.38"></div>
<div class="abs" style="left:954.05px;top:42.62px;width:12.00px;height:1px;background:#c9cad7;opacity:0.38"></div>
<div class="abs" style="left:966.05px;top:42.62px;width:0.75px;height:1px;background:#c9cad7;opacity:0.38"></div>
<div class="abs" style="left:967.55px;top:42.62px;width:1.50px;height:1px;background:#7aa35c;opacity:0.38"></div>
<div class="abs" style="left:969.80px;top:42.62px;width:2.25px;height:1px;background:#7aa35c;opacity:0.38"></div>
<div class="abs" style="left:972.80px;top:42.62px;width:3.00px;height:1px;background:#7aa35c;opacity:0.38"></div>
<div class="abs" style="left:976.55px;top:42.62px;width:6.00px;height:1px;background:#7aa35c;opacity:0.38"></div>
<div class="abs" style="left:983.30px;top:42.62px;width:3.00px;height:1px;background:#7aa35c;opacity:0.38"></div>
<div class="abs" style="left:987.05px;top:42.62px;width:5.25px;height:1px;background:#7aa35c;opacity:0.38"></div>
<div class="abs" style="left:993.05px;top:42.62px;width:3.00px;height:1px;background:#7aa35c;opacity:0.38"></div>
<div class="abs" style="left:929.30px;top:44.14px;width:5.25px;height:1px;background:#5a9fd4;opacity:0.38"></div>
<div class="abs" style="left:934.55px;top:44.14px;width:0.75px;height:1px;background:#c26fc9;opacity:0.38"></div>
<div class="abs" style="left:935.30px;top:44.14px;width:5.25px;height:1px;background:#5a9fd4;opacity:0.38"></div>
<div class="abs" style="left:941.30px;top:44.14px;width:0.75px;height:1px;background:#c9cad7;opacity:0.38"></div>
<div class="abs" style="left:942.05px;top:44.14px;width:0.75px;height:1px;background:#c9cad7;opacity:0.38"></div>
<div class="abs" style="left:943.55px;top:44.14px;width:3.00px;height:1px;background:#5a9fd4;opacity:0.38"></div>
<div class="abs" style="left:946.55px;top:44.14px;width:0.75px;height:1px;background:#c26fc9;opacity:0.38"></div>
<div class="abs" style="left:948.05px;top:44.14px;width:5.25px;height:1px;background:#3ba66b;opacity:0.38"></div>
<div class="abs" style="left:954.05px;top:44.14px;width:18.75px;height:1px;background:#c9cad7;opacity:0.38"></div>
<div class="abs" style="left:972.80px;top:44.14px;width:0.75px;height:1px;background:#c9cad7;opacity:0.38"></div>
<div class="abs" style="left:974.30px;top:44.14px;width:1.50px;height:1px;background:#7aa35c;opacity:0.38"></div>
<div class="abs" style="left:976.55px;top:44.14px;width:3.00px;height:1px;background:#7aa35c;opacity:0.38"></div>
<div class="abs" style="left:980.30px;top:44.14px;width:3.00px;height:1px;background:#7aa35c;opacity:0.38"></div>
<div class="abs" style="left:984.05px;top:44.14px;width:1.50px;height:1px;background:#7aa35c;opacity:0.38"></div>
<div class="abs" style="left:986.30px;top:44.14px;width:5.25px;height:1px;background:#7aa35c;opacity:0.38"></div>
<div class="abs" style="left:992.30px;top:44.14px;width:6.00px;height:1px;background:#7aa35c;opacity:0.38"></div>
<div class="abs" style="left:999.05px;top:44.14px;width:0.75px;height:1px;background:#7aa35c;opacity:0.38"></div>
<div class="abs" style="left:1000.55px;top:44.14px;width:5.25px;height:1px;background:#7aa35c;opacity:0.38"></div>
<div class="abs" style="left:929.30px;top:47.18px;width:1.50px;height:1px;background:#7aa35c;opacity:0.38"></div>
<div class="abs" style="left:931.55px;top:47.18px;width:6.00px;height:1px;background:#7aa35c;opacity:0.38"></div>
<div class="abs" style="left:938.30px;top:47.18px;width:1.50px;height:1px;background:#7aa35c;opacity:0.38"></div>
<div class="abs" style="left:940.55px;top:47.18px;width:3.00px;height:1px;background:#7aa35c;opacity:0.38"></div>
<div class="abs" style="left:944.30px;top:47.18px;width:0.75px;height:1px;background:#7aa35c;opacity:0.38"></div>
<div class="abs" style="left:945.80px;top:47.18px;width:5.25px;height:1px;background:#7aa35c;opacity:0.38"></div>
<div class="abs" style="left:951.80px;top:47.18px;width:1.50px;height:1px;background:#7aa35c;opacity:0.38"></div>
<div class="abs" style="left:954.05px;top:47.18px;width:1.50px;height:1px;background:#7aa35c;opacity:0.38"></div>
<div class="abs" style="left:956.30px;top:47.18px;width:5.25px;height:1px;background:#7aa35c;opacity:0.38"></div>
<div class="abs" style="left:962.30px;top:47.18px;width:1.50px;height:1px;background:#7aa35c;opacity:0.38"></div>
<div class="abs" style="left:964.55px;top:47.18px;width:4.50px;height:1px;background:#7aa35c;opacity:0.38"></div>
<div class="abs" style="left:969.80px;top:47.18px;width:3.00px;height:1px;background:#7aa35c;opacity:0.38"></div>
<div class="abs" style="left:973.55px;top:47.18px;width:2.25px;height:1px;background:#7aa35c;opacity:0.38"></div>
<div class="abs" style="left:976.55px;top:47.18px;width:4.50px;height:1px;background:#7aa35c;opacity:0.38"></div>
<div class="abs" style="left:929.30px;top:48.70px;width:1.50px;height:1px;background:#7aa35c;opacity:0.38"></div>
<div class="abs" style="left:931.55px;top:48.70px;width:6.00px;height:1px;background:#7aa35c;opacity:0.38"></div>
<div class="abs" style="left:938.30px;top:48.70px;width:3.75px;height:1px;background:#7aa35c;opacity:0.38"></div>
<div class="abs" style="left:942.80px;top:48.70px;width:2.25px;height:1px;background:#7aa35c;opacity:0.38"></div>
<div class="abs" style="left:945.80px;top:48.70px;width:6.00px;height:1px;background:#7aa35c;opacity:0.38"></div>
<div class="abs" style="left:952.55px;top:48.70px;width:2.25px;height:1px;background:#7aa35c;opacity:0.38"></div>
<div class="abs" style="left:955.55px;top:48.70px;width:1.50px;height:1px;background:#7aa35c;opacity:0.38"></div>
<div class="abs" style="left:957.80px;top:48.70px;width:4.50px;height:1px;background:#7aa35c;opacity:0.38"></div>
<div class="abs" style="left:963.05px;top:48.70px;width:3.00px;height:1px;background:#7aa35c;opacity:0.38"></div>
<div class="abs" style="left:966.80px;top:48.70px;width:5.25px;height:1px;background:#7aa35c;opacity:0.38"></div>
<div class="abs" style="left:972.80px;top:48.70px;width:2.25px;height:1px;background:#7aa35c;opacity:0.38"></div>
<div class="abs" style="left:975.80px;top:48.70px;width:6.00px;height:1px;background:#7aa35c;opacity:0.38"></div>
<div class="abs" style="left:929.30px;top:50.22px;width:1.50px;height:1px;background:#7aa35c;opacity:0.38"></div>
<div class="abs" style="left:931.55px;top:50.22px;width:6.00px;height:1px;background:#7aa35c;opacity:0.38"></div>
<div class="abs" style="left:938.30px;top:50.22px;width:5.25px;height:1px;background:#7aa35c;opacity:0.38"></div>
<div class="abs" style="left:944.30px;top:50.22px;width:3.75px;height:1px;background:#7aa35c;opacity:0.38"></div>
<div class="abs" style="left:948.80px;top:50.22px;width:1.50px;height:1px;background:#7aa35c;opacity:0.38"></div>
<div class="abs" style="left:951.05px;top:50.22px;width:3.75px;height:1px;background:#7aa35c;opacity:0.38"></div>
<div class="abs" style="left:955.55px;top:50.22px;width:3.00px;height:1px;background:#7aa35c;opacity:0.38"></div>
<div class="abs" style="left:959.30px;top:50.22px;width:3.00px;height:1px;background:#7aa35c;opacity:0.38"></div>
<div class="abs" style="left:963.05px;top:50.22px;width:1.50px;height:1px;background:#7aa35c;opacity:0.38"></div>
<div class="abs" style="left:965.30px;top:50.22px;width:3.75px;height:1px;background:#7aa35c;opacity:0.38"></div>
<div class="abs" style="left:929.30px;top:51.74px;width:6.00px;height:1px;background:#5a9fd4;opacity:0.38"></div>
<div class="abs" style="left:936.05px;top:51.74px;width:9.75px;height:1px;background:#c9cad7;opacity:0.38"></div>
<div class="abs" style="left:945.80px;top:51.74px;width:0.75px;height:1px;background:#c26fc9;opacity:0.38"></div>
<div class="abs" style="left:946.55px;top:51.74px;width:5.25px;height:1px;background:#5a9fd4;opacity:0.38"></div>
<div class="abs" style="left:952.55px;top:51.74px;width:8.25px;height:1px;background:#c9cad7;opacity:0.38"></div>
<div class="abs" style="left:960.80px;top:51.74px;width:0.75px;height:1px;background:#c26fc9;opacity:0.38"></div>
<div class="abs" style="left:962.30px;top:51.74px;width:4.50px;height:1px;background:#3ba66b;opacity:0.38"></div>
<div class="abs" style="left:967.55px;top:51.74px;width:5.25px;height:1px;background:#3ba66b;opacity:0.38"></div>
<div class="abs" style="left:973.55px;top:51.74px;width:0.75px;height:1px;background:#c26fc9;opacity:0.38"></div>
<div class="abs" style="left:974.30px;top:51.74px;width:3.00px;height:1px;background:#5a9fd4;opacity:0.38"></div>
<div class="abs" style="left:977.30px;top:51.74px;width:0.75px;height:1px;background:#c26fc9;opacity:0.38"></div>
<div class="abs" style="left:978.80px;top:51.74px;width:0.75px;height:1px;background:#c26fc9;opacity:0.38"></div>
<div class="abs" style="left:932.30px;top:53.26px;width:1.50px;height:1px;background:#7aa35c;opacity:0.38"></div>
<div class="abs" style="left:934.55px;top:53.26px;width:1.50px;height:1px;background:#7aa35c;opacity:0.38"></div>
<div class="abs" style="left:936.80px;top:53.26px;width:3.00px;height:1px;background:#7aa35c;opacity:0.38"></div>
<div class="abs" style="left:940.55px;top:53.26px;width:1.50px;height:1px;background:#7aa35c;opacity:0.38"></div>
<div class="abs" style="left:942.80px;top:53.26px;width:2.25px;height:1px;background:#7aa35c;opacity:0.38"></div>
<div class="abs" style="left:945.80px;top:53.26px;width:3.75px;height:1px;background:#7aa35c;opacity:0.38"></div>
<div class="abs" style="left:950.30px;top:53.26px;width:3.00px;height:1px;background:#7aa35c;opacity:0.38"></div>
<div class="abs" style="left:932.30px;top:54.78px;width:1.50px;height:1px;background:#7aa35c;opacity:0.38"></div>
<div class="abs" style="left:934.55px;top:54.78px;width:3.00px;height:1px;background:#7aa35c;opacity:0.38"></div>
<div class="abs" style="left:938.30px;top:54.78px;width:5.25px;height:1px;background:#7aa35c;opacity:0.38"></div>
<div class="abs" style="left:944.30px;top:54.78px;width:3.00px;height:1px;background:#7aa35c;opacity:0.38"></div>
<div class="abs" style="left:948.05px;top:54.78px;width:0.75px;height:1px;background:#7aa35c;opacity:0.38"></div>
<div class="abs" style="left:949.55px;top:54.78px;width:6.00px;height:1px;background:#7aa35c;opacity:0.38"></div>
<div class="abs" style="left:956.30px;top:54.78px;width:7.50px;height:1px;background:#7aa35c;opacity:0.38"></div>
<div class="abs" style="left:964.55px;top:54.78px;width:3.75px;height:1px;background:#7aa35c;opacity:0.38"></div>
<div class="abs" style="left:969.05px;top:54.78px;width:9.00px;height:1px;background:#7aa35c;opacity:0.38"></div>
<div class="abs" style="left:978.80px;top:54.78px;width:3.00px;height:1px;background:#7aa35c;opacity:0.38"></div>
<div class="abs" style="left:982.55px;top:54.78px;width:1.50px;height:1px;background:#7aa35c;opacity:0.38"></div>
<div class="abs" style="left:984.80px;top:54.78px;width:3.00px;height:1px;background:#7aa35c;opacity:0.38"></div>
<div class="abs" style="left:988.55px;top:54.78px;width:2.25px;height:1px;background:#7aa35c;opacity:0.38"></div>
<div class="abs" style="left:991.55px;top:54.78px;width:6.00px;height:1px;background:#7aa35c;opacity:0.38"></div>
<div class="abs" style="left:932.30px;top:56.30px;width:1.50px;height:1px;background:#7aa35c;opacity:0.38"></div>
<div class="abs" style="left:934.55px;top:56.30px;width:2.25px;height:1px;background:#7aa35c;opacity:0.38"></div>
<div class="abs" style="left:937.55px;top:56.30px;width:0.75px;height:1px;background:#7aa35c;opacity:0.38"></div>
<div class="abs" style="left:939.05px;top:56.30px;width:5.25px;height:1px;background:#7aa35c;opacity:0.38"></div>
<div class="abs" style="left:945.05px;top:56.30px;width:3.75px;height:1px;background:#7aa35c;opacity:0.38"></div>
<div class="abs" style="left:949.55px;top:56.30px;width:3.00px;height:1px;background:#7aa35c;opacity:0.38"></div>
<div class="abs" style="left:953.30px;top:56.30px;width:10.50px;height:1px;background:#7aa35c;opacity:0.38"></div>
<div class="abs" style="left:964.55px;top:56.30px;width:4.50px;height:1px;background:#7aa35c;opacity:0.38"></div>
<div class="abs" style="left:969.80px;top:56.30px;width:2.25px;height:1px;background:#7aa35c;opacity:0.38"></div>
<div class="abs" style="left:972.80px;top:56.30px;width:3.75px;height:1px;background:#7aa35c;opacity:0.38"></div>
<div class="abs" style="left:932.30px;top:57.82px;width:1.50px;height:1px;background:#e8b339;opacity:0.38"></div>
<div class="abs" style="left:934.55px;top:57.82px;width:0.75px;height:1px;background:#c26fc9;opacity:0.38"></div>
<div class="abs" style="left:935.30px;top:57.82px;width:18.75px;height:1px;background:#c9cad7;opacity:0.38"></div>
<div class="abs" style="left:954.05px;top:57.82px;width:0.75px;height:1px;background:#c26fc9;opacity:0.38"></div>
<div class="abs" style="left:954.80px;top:57.82px;width:8.25px;height:1px;background:#c9cad7;opacity:0.38"></div>
<div class="abs" style="left:963.05px;top:57.82px;width:0.75px;height:1px;background:#c26fc9;opacity:0.38"></div>
<div class="abs" style="left:964.55px;top:57.82px;width:0.75px;height:1px;background:#c9cad7;opacity:0.38"></div>
<div class="abs" style="left:965.30px;top:57.82px;width:0.75px;height:1px;background:#c9cad7;opacity:0.38"></div>
<div class="abs" style="left:966.80px;top:57.82px;width:0.75px;height:1px;background:#c9cad7;opacity:0.38"></div>
<div class="abs" style="left:967.55px;top:57.82px;width:0.75px;height:1px;background:#c26fc9;opacity:0.38"></div>
<div class="abs" style="left:969.05px;top:57.82px;width:0.75px;height:1px;background:#c26fc9;opacity:0.38"></div>
<div class="abs" style="left:935.30px;top:59.34px;width:18.75px;height:1px;background:#c9cad7;opacity:0.38"></div>
<div class="abs" style="left:954.05px;top:59.34px;width:0.75px;height:1px;background:#c26fc9;opacity:0.38"></div>
<div class="abs" style="left:954.80px;top:59.34px;width:8.25px;height:1px;background:#c9cad7;opacity:0.38"></div>
<div class="abs" style="left:963.05px;top:59.34px;width:0.75px;height:1px;background:#c26fc9;opacity:0.38"></div>
<div class="abs" style="left:964.55px;top:59.34px;width:0.75px;height:1px;background:#c9cad7;opacity:0.38"></div>
<div class="abs" style="left:966.05px;top:59.34px;width:0.75px;height:1px;background:#c9cad7;opacity:0.38"></div>
<div class="abs" style="left:966.80px;top:59.34px;width:0.75px;height:1px;background:#c9cad7;opacity:0.38"></div>
<div class="abs" style="left:935.30px;top:60.86px;width:12.00px;height:1px;background:#c9cad7;opacity:0.38"></div>
<div class="abs" style="left:947.30px;top:60.86px;width:0.75px;height:1px;background:#c26fc9;opacity:0.38"></div>
<div class="abs" style="left:948.05px;top:60.86px;width:8.25px;height:1px;background:#c9cad7;opacity:0.38"></div>
<div class="abs" style="left:956.30px;top:60.86px;width:0.75px;height:1px;background:#c26fc9;opacity:0.38"></div>
<div class="abs" style="left:957.80px;top:60.86px;width:0.75px;height:1px;background:#c9cad7;opacity:0.38"></div>
<div class="abs" style="left:959.30px;top:60.86px;width:12.00px;height:1px;background:#c9cad7;opacity:0.38"></div>
<div class="abs" style="left:971.30px;top:60.86px;width:0.75px;height:1px;background:#c26fc9;opacity:0.38"></div>
<div class="abs" style="left:972.05px;top:60.86px;width:8.25px;height:1px;background:#c9cad7;opacity:0.38"></div>
<div class="abs" style="left:980.30px;top:60.86px;width:0.75px;height:1px;background:#c26fc9;opacity:0.38"></div>
<div class="abs" style="left:981.05px;top:60.86px;width:0.75px;height:1px;background:#c9cad7;opacity:0.38"></div>
<div class="abs" style="left:932.30px;top:62.38px;width:0.75px;height:1px;background:#c26fc9;opacity:0.38"></div>
<div class="abs" style="left:932.30px;top:65.42px;width:1.50px;height:1px;background:#7aa35c;opacity:0.38"></div>
<div class="abs" style="left:934.55px;top:65.42px;width:3.00px;height:1px;background:#7aa35c;opacity:0.38"></div>
<div class="abs" style="left:938.30px;top:65.42px;width:3.75px;height:1px;background:#7aa35c;opacity:0.38"></div>
<div class="abs" style="left:942.80px;top:65.42px;width:5.25px;height:1px;background:#7aa35c;opacity:0.38"></div>
<div class="abs" style="left:948.80px;top:65.42px;width:9.00px;height:1px;background:#7aa35c;opacity:0.38"></div>
<div class="abs" style="left:958.55px;top:65.42px;width:1.50px;height:1px;background:#7aa35c;opacity:0.38"></div>
<div class="abs" style="left:960.80px;top:65.42px;width:2.25px;height:1px;background:#7aa35c;opacity:0.38"></div>
<div class="abs" style="left:963.80px;top:65.42px;width:3.75px;height:1px;background:#7aa35c;opacity:0.38"></div>
<div class="abs" style="left:968.30px;top:65.42px;width:0.75px;height:1px;background:#7aa35c;opacity:0.38"></div>
<div class="abs" style="left:969.80px;top:65.42px;width:5.25px;height:1px;background:#7aa35c;opacity:0.38"></div>
<div class="abs" style="left:932.30px;top:66.94px;width:1.50px;height:1px;background:#7aa35c;opacity:0.38"></div>
<div class="abs" style="left:934.55px;top:66.94px;width:12.75px;height:1px;background:#7aa35c;opacity:0.38"></div>
<div class="abs" style="left:948.05px;top:66.94px;width:1.50px;height:1px;background:#7aa35c;opacity:0.38"></div>
<div class="abs" style="left:950.30px;top:66.94px;width:2.25px;height:1px;background:#7aa35c;opacity:0.38"></div>
<div class="abs" style="left:953.30px;top:66.94px;width:5.25px;height:1px;background:#7aa35c;opacity:0.38"></div>
<div class="abs" style="left:959.30px;top:66.94px;width:3.75px;height:1px;background:#7aa35c;opacity:0.38"></div>
<div class="abs" style="left:963.80px;top:66.94px;width:3.00px;height:1px;background:#7aa35c;opacity:0.38"></div>
<div class="abs" style="left:967.55px;top:66.94px;width:1.50px;height:1px;background:#7aa35c;opacity:0.38"></div>
<div class="abs" style="left:969.80px;top:66.94px;width:5.25px;height:1px;background:#7aa35c;opacity:0.38"></div>
<div class="abs" style="left:932.30px;top:68.46px;width:1.50px;height:1px;background:#7aa35c;opacity:0.38"></div>
<div class="abs" style="left:934.55px;top:68.46px;width:6.75px;height:1px;background:#7aa35c;opacity:0.38"></div>
<div class="abs" style="left:942.05px;top:68.46px;width:1.50px;height:1px;background:#7aa35c;opacity:0.38"></div>
<div class="abs" style="left:944.30px;top:68.46px;width:0.75px;height:1px;background:#7aa35c;opacity:0.38"></div>
<div class="abs" style="left:945.80px;top:68.46px;width:3.00px;height:1px;background:#7aa35c;opacity:0.38"></div>
<div class="abs" style="left:949.55px;top:68.46px;width:1.50px;height:1px;background:#7aa35c;opacity:0.38"></div>
<div class="abs" style="left:951.80px;top:68.46px;width:3.00px;height:1px;background:#7aa35c;opacity:0.38"></div>
<div class="abs" style="left:955.55px;top:68.46px;width:6.75px;height:1px;background:#7aa35c;opacity:0.38"></div>
<div class="abs" style="left:963.05px;top:68.46px;width:1.50px;height:1px;background:#7aa35c;opacity:0.38"></div>
<div class="abs" style="left:965.30px;top:68.46px;width:6.75px;height:1px;background:#7aa35c;opacity:0.38"></div>
<div class="abs" style="left:972.80px;top:68.46px;width:6.00px;height:1px;background:#7aa35c;opacity:0.38"></div>
<div class="abs" style="left:979.55px;top:68.46px;width:3.75px;height:1px;background:#7aa35c;opacity:0.38"></div>
<div class="abs" style="left:984.05px;top:68.46px;width:2.25px;height:1px;background:#7aa35c;opacity:0.38"></div>
<div class="abs" style="left:987.05px;top:68.46px;width:3.00px;height:1px;background:#7aa35c;opacity:0.38"></div>
<div class="abs" style="left:990.80px;top:68.46px;width:3.00px;height:1px;background:#7aa35c;opacity:0.38"></div>
<div class="abs" style="left:994.55px;top:68.46px;width:3.75px;height:1px;background:#7aa35c;opacity:0.38"></div>
<div class="abs" style="left:932.30px;top:69.98px;width:3.00px;height:1px;background:#5a9fd4;opacity:0.38"></div>
<div class="abs" style="left:936.05px;top:69.98px;width:23.25px;height:1px;background:#c9cad7;opacity:0.38"></div>
<div class="abs" style="left:960.05px;top:69.98px;width:0.75px;height:1px;background:#c9cad7;opacity:0.38"></div>
<div class="abs" style="left:961.55px;top:69.98px;width:18.75px;height:1px;background:#c9cad7;opacity:0.38"></div>
<div class="abs" style="left:980.30px;top:69.98px;width:0.75px;height:1px;background:#c26fc9;opacity:0.38"></div>
<div class="abs" style="left:981.05px;top:69.98px;width:8.25px;height:1px;background:#c9cad7;opacity:0.38"></div>
<div class="abs" style="left:989.30px;top:69.98px;width:0.75px;height:1px;background:#c26fc9;opacity:0.38"></div>
<div class="abs" style="left:990.80px;top:69.98px;width:0.75px;height:1px;background:#c9cad7;opacity:0.38"></div>
<div class="abs" style="left:992.30px;top:69.98px;width:0.75px;height:1px;background:#c9cad7;opacity:0.38"></div>
<div class="abs" style="left:993.80px;top:69.98px;width:5.25px;height:1px;background:#c9cad7;opacity:0.38"></div>
<div class="abs" style="left:999.05px;top:69.98px;width:0.75px;height:1px;background:#c9cad7;opacity:0.38"></div>
<div class="abs" style="left:932.30px;top:71.50px;width:3.00px;height:1px;background:#5a9fd4;opacity:0.38"></div>
<div class="abs" style="left:936.05px;top:71.50px;width:15.75px;height:1px;background:#c9cad7;opacity:0.38"></div>
<div class="abs" style="left:952.55px;top:71.50px;width:0.75px;height:1px;background:#c9cad7;opacity:0.38"></div>
<div class="abs" style="left:954.05px;top:71.50px;width:23.25px;height:1px;background:#c9cad7;opacity:0.38"></div>
<div class="abs" style="left:978.05px;top:71.50px;width:0.75px;height:1px;background:#c9cad7;opacity:0.38"></div>
<div class="abs" style="left:978.80px;top:71.50px;width:0.75px;height:1px;background:#c9cad7;opacity:0.38"></div>
<div class="abs" style="left:980.30px;top:71.50px;width:3.75px;height:1px;background:#1e9ad0;opacity:0.38"></div>
<div class="abs" style="left:984.05px;top:71.50px;width:0.75px;height:1px;background:#c9cad7;opacity:0.38"></div>
<div class="abs" style="left:984.80px;top:71.50px;width:6.75px;height:1px;background:#c9cad7;opacity:0.38"></div>
<div class="abs" style="left:991.55px;top:71.50px;width:0.75px;height:1px;background:#c9cad7;opacity:0.38"></div>
<div class="abs" style="left:932.30px;top:74.54px;width:1.50px;height:1px;background:#e8b339;opacity:0.38"></div>
<div class="abs" style="left:934.55px;top:74.54px;width:0.75px;height:1px;background:#c26fc9;opacity:0.38"></div>
<div class="abs" style="left:935.30px;top:74.54px;width:15.75px;height:1px;background:#c9cad7;opacity:0.38"></div>
<div class="abs" style="left:951.05px;top:74.54px;width:0.75px;height:1px;background:#c26fc9;opacity:0.38"></div>
<div class="abs" style="left:952.55px;top:74.54px;width:0.75px;height:1px;background:#c26fc9;opacity:0.38"></div>
<div class="abs" style="left:935.30px;top:76.06px;width:1.50px;height:1px;background:#7aa35c;opacity:0.38"></div>
<div class="abs" style="left:937.55px;top:76.06px;width:1.50px;height:1px;background:#7aa35c;opacity:0.38"></div>
<div class="abs" style="left:939.80px;top:76.06px;width:4.50px;height:1px;background:#7aa35c;opacity:0.38"></div>
<div class="abs" style="left:945.05px;top:76.06px;width:3.00px;height:1px;background:#7aa35c;opacity:0.38"></div>
<div class="abs" style="left:948.80px;top:76.06px;width:2.25px;height:1px;background:#7aa35c;opacity:0.38"></div>
<div class="abs" style="left:951.80px;top:76.06px;width:5.25px;height:1px;background:#7aa35c;opacity:0.38"></div>
<div class="abs" style="left:957.80px;top:76.06px;width:3.00px;height:1px;background:#7aa35c;opacity:0.38"></div>
<div class="abs" style="left:961.55px;top:76.06px;width:2.25px;height:1px;background:#7aa35c;opacity:0.38"></div>
<div class="abs" style="left:964.55px;top:76.06px;width:5.25px;height:1px;background:#7aa35c;opacity:0.38"></div>
<div class="abs" style="left:970.55px;top:76.06px;width:0.75px;height:1px;background:#7aa35c;opacity:0.38"></div>
<div class="abs" style="left:972.05px;top:76.06px;width:5.25px;height:1px;background:#7aa35c;opacity:0.38"></div>
<div class="abs" style="left:978.05px;top:76.06px;width:2.25px;height:1px;background:#7aa35c;opacity:0.38"></div>
<div class="abs" style="left:981.05px;top:76.06px;width:4.50px;height:1px;background:#7aa35c;opacity:0.38"></div>
<div class="abs" style="left:986.30px;top:76.06px;width:2.25px;height:1px;background:#7aa35c;opacity:0.38"></div>
<div class="abs" style="left:989.30px;top:76.06px;width:9.00px;height:1px;background:#7aa35c;opacity:0.38"></div>
<div class="abs" style="left:999.05px;top:76.06px;width:3.00px;height:1px;background:#7aa35c;opacity:0.38"></div>
<div class="abs" style="left:935.30px;top:77.58px;width:12.00px;height:1px;background:#c9cad7;opacity:0.38"></div>
<div class="abs" style="left:947.30px;top:77.58px;width:0.75px;height:1px;background:#c26fc9;opacity:0.38"></div>
<div class="abs" style="left:948.05px;top:77.58px;width:8.25px;height:1px;background:#c9cad7;opacity:0.38"></div>
<div class="abs" style="left:956.30px;top:77.58px;width:0.75px;height:1px;background:#c26fc9;opacity:0.38"></div>
<div class="abs" style="left:957.05px;top:77.58px;width:0.75px;height:1px;background:#c9cad7;opacity:0.38"></div>
<div class="abs" style="left:957.80px;top:77.58px;width:0.75px;height:1px;background:#c9cad7;opacity:0.38"></div>
<div class="abs" style="left:958.55px;top:77.58px;width:0.75px;height:1px;background:#c9cad7;opacity:0.38"></div>
<div class="abs" style="left:935.30px;top:79.10px;width:18.75px;height:1px;background:#c9cad7;opacity:0.38"></div>
<div class="abs" style="left:954.05px;top:79.10px;width:0.75px;height:1px;background:#c26fc9;opacity:0.38"></div>
<div class="abs" style="left:954.80px;top:79.10px;width:8.25px;height:1px;background:#c9cad7;opacity:0.38"></div>
<div class="abs" style="left:963.05px;top:79.10px;width:0.75px;height:1px;background:#c26fc9;opacity:0.38"></div>
<div class="abs" style="left:964.55px;top:79.10px;width:0.75px;height:1px;background:#c9cad7;opacity:0.38"></div>
<div class="abs" style="left:966.05px;top:79.10px;width:3.75px;height:1px;background:#1e9ad0;opacity:0.38"></div>
<div class="abs" style="left:969.80px;top:79.10px;width:0.75px;height:1px;background:#c9cad7;opacity:0.38"></div>
<div class="abs" style="left:970.55px;top:79.10px;width:6.75px;height:1px;background:#c9cad7;opacity:0.38"></div>
<div class="abs" style="left:977.30px;top:79.10px;width:0.75px;height:1px;background:#c9cad7;opacity:0.38"></div>
<div class="abs" style="left:935.30px;top:80.62px;width:4.50px;height:1px;background:#3ba66b;opacity:0.38"></div>
<div class="abs" style="left:940.55px;top:80.62px;width:3.00px;height:1px;background:#5a9fd4;opacity:0.38"></div>
<div class="abs" style="left:943.55px;top:80.62px;width:0.75px;height:1px;background:#c9cad7;opacity:0.38"></div>
<div class="abs" style="left:932.30px;top:82.14px;width:0.75px;height:1px;background:#c26fc9;opacity:0.38"></div>
<div class="abs" style="left:933.80px;top:82.14px;width:3.00px;height:1px;background:#e8b339;opacity:0.38"></div>
<div class="abs" style="left:937.55px;top:82.14px;width:0.75px;height:1px;background:#c26fc9;opacity:0.38"></div>
<div class="abs" style="left:935.30px;top:83.66px;width:1.50px;height:1px;background:#7aa35c;opacity:0.38"></div>
<div class="abs" style="left:937.55px;top:83.66px;width:1.50px;height:1px;background:#7aa35c;opacity:0.38"></div>
<div class="abs" style="left:939.80px;top:83.66px;width:2.25px;height:1px;background:#7aa35c;opacity:0.38"></div>
<div class="abs" style="left:942.80px;top:83.66px;width:4.50px;height:1px;background:#7aa35c;opacity:0.38"></div>
<div class="abs" style="left:948.05px;top:83.66px;width:3.00px;height:1px;background:#7aa35c;opacity:0.38"></div>
<div class="abs" style="left:951.80px;top:83.66px;width:2.25px;height:1px;background:#7aa35c;opacity:0.38"></div>
<div class="abs" style="left:954.80px;top:83.66px;width:5.25px;height:1px;background:#7aa35c;opacity:0.38"></div>
<div class="abs" style="left:960.80px;top:83.66px;width:4.50px;height:1px;background:#7aa35c;opacity:0.38"></div>
<div class="abs" style="left:966.05px;top:83.66px;width:2.25px;height:1px;background:#7aa35c;opacity:0.38"></div>
<div class="abs" style="left:969.05px;top:83.66px;width:8.25px;height:1px;background:#7aa35c;opacity:0.38"></div>
<div class="abs" style="left:978.05px;top:83.66px;width:3.00px;height:1px;background:#7aa35c;opacity:0.38"></div>
<div class="abs" style="left:981.80px;top:83.66px;width:1.50px;height:1px;background:#7aa35c;opacity:0.38"></div>
<div class="abs" style="left:984.05px;top:83.66px;width:3.75px;height:1px;background:#7aa35c;opacity:0.38"></div>
<div class="abs" style="left:988.55px;top:83.66px;width:5.25px;height:1px;background:#7aa35c;opacity:0.38"></div>
<div class="abs" style="left:935.30px;top:85.18px;width:1.50px;height:1px;background:#7aa35c;opacity:0.38"></div>
<div class="abs" style="left:937.55px;top:85.18px;width:6.00px;height:1px;background:#7aa35c;opacity:0.38"></div>
<div class="abs" style="left:944.30px;top:85.18px;width:5.25px;height:1px;background:#7aa35c;opacity:0.38"></div>
<div class="abs" style="left:950.30px;top:85.18px;width:2.25px;height:1px;background:#7aa35c;opacity:0.38"></div>
<div class="abs" style="left:953.30px;top:85.18px;width:8.25px;height:1px;background:#7aa35c;opacity:0.38"></div>
<div class="abs" style="left:962.30px;top:85.18px;width:2.25px;height:1px;background:#7aa35c;opacity:0.38"></div>
<div class="abs" style="left:965.30px;top:85.18px;width:5.25px;height:1px;background:#7aa35c;opacity:0.38"></div>
<div class="abs" style="left:971.30px;top:85.18px;width:2.25px;height:1px;background:#7aa35c;opacity:0.38"></div>
<div class="abs" style="left:974.30px;top:85.18px;width:3.75px;height:1px;background:#7aa35c;opacity:0.38"></div>
<div class="abs" style="left:978.80px;top:85.18px;width:5.25px;height:1px;background:#7aa35c;opacity:0.38"></div>
<div class="abs" style="left:984.80px;top:85.18px;width:1.50px;height:1px;background:#7aa35c;opacity:0.38"></div>
<div class="abs" style="left:987.05px;top:85.18px;width:2.25px;height:1px;background:#7aa35c;opacity:0.38"></div>
<div class="abs" style="left:990.05px;top:85.18px;width:3.00px;height:1px;background:#7aa35c;opacity:0.38"></div>
<div class="abs" style="left:935.30px;top:86.70px;width:4.50px;height:1px;background:#1e9ad0;opacity:0.38"></div>
<div class="abs" style="left:939.80px;top:86.70px;width:0.75px;height:1px;background:#c26fc9;opacity:0.38"></div>
<div class="abs" style="left:940.55px;top:86.70px;width:3.75px;height:1px;background:#d19a7a;opacity:0.38"></div>
<div class="abs" style="left:945.05px;top:86.70px;width:3.00px;height:1px;background:#d19a7a;opacity:0.38"></div>
<div class="abs" style="left:948.80px;top:86.70px;width:2.25px;height:1px;background:#d19a7a;opacity:0.38"></div>
<div class="abs" style="left:951.80px;top:86.70px;width:3.00px;height:1px;background:#d19a7a;opacity:0.38"></div>
<div class="abs" style="left:955.55px;top:86.70px;width:6.00px;height:1px;background:#d19a7a;opacity:0.38"></div>
<div class="abs" style="left:962.30px;top:86.70px;width:3.00px;height:1px;background:#d19a7a;opacity:0.38"></div>
<div class="abs" style="left:966.05px;top:86.70px;width:3.00px;height:1px;background:#d19a7a;opacity:0.38"></div>
<div class="abs" style="left:969.80px;top:86.70px;width:3.00px;height:1px;background:#d19a7a;opacity:0.38"></div>
<div class="abs" style="left:973.55px;top:86.70px;width:1.50px;height:1px;background:#d19a7a;opacity:0.38"></div>
<div class="abs" style="left:975.80px;top:86.70px;width:3.75px;height:1px;background:#d19a7a;opacity:0.38"></div>
<div class="abs" style="left:980.30px;top:86.70px;width:0.75px;height:1px;background:#d19a7a;opacity:0.38"></div>
<div class="abs" style="left:981.80px;top:86.70px;width:5.25px;height:1px;background:#d19a7a;opacity:0.38"></div>
<div class="abs" style="left:987.80px;top:86.70px;width:5.25px;height:1px;background:#d19a7a;opacity:0.38"></div>
<div class="abs" style="left:993.80px;top:86.70px;width:7.50px;height:1px;background:#d19a7a;opacity:0.38"></div>
<div class="abs" style="left:1001.30px;top:86.70px;width:0.75px;height:1px;background:#c26fc9;opacity:0.38"></div>
<div class="abs" style="left:1002.05px;top:86.70px;width:0.75px;height:1px;background:#c9cad7;opacity:0.38"></div>
<div class="abs" style="left:932.30px;top:88.22px;width:0.75px;height:1px;background:#c26fc9;opacity:0.38"></div>
<div class="abs" style="left:929.30px;top:89.74px;width:0.75px;height:1px;background:#c26fc9;opacity:0.38"></div>
<div class="abs" style="left:929.30px;top:92.78px;width:1.50px;height:1px;background:#7aa35c;opacity:0.38"></div>
<div class="abs" style="left:931.55px;top:92.78px;width:6.00px;height:1px;background:#7aa35c;opacity:0.38"></div>
<div class="abs" style="left:938.30px;top:92.78px;width:1.50px;height:1px;background:#7aa35c;opacity:0.38"></div>
<div class="abs" style="left:940.55px;top:92.78px;width:3.75px;height:1px;background:#7aa35c;opacity:0.38"></div>
<div class="abs" style="left:945.05px;top:92.78px;width:2.25px;height:1px;background:#7aa35c;opacity:0.38"></div>
<div class="abs" style="left:948.05px;top:92.78px;width:3.00px;height:1px;background:#7aa35c;opacity:0.38"></div>
<div class="abs" style="left:951.80px;top:92.78px;width:6.00px;height:1px;background:#7aa35c;opacity:0.38"></div>
<div class="abs" style="left:958.55px;top:92.78px;width:1.50px;height:1px;background:#7aa35c;opacity:0.38"></div>
<div class="abs" style="left:960.80px;top:92.78px;width:5.25px;height:1px;background:#7aa35c;opacity:0.38"></div>
<div class="abs" style="left:966.80px;top:92.78px;width:3.00px;height:1px;background:#7aa35c;opacity:0.38"></div>
<div class="abs" style="left:929.30px;top:94.30px;width:1.50px;height:1px;background:#7aa35c;opacity:0.38"></div>
<div class="abs" style="left:931.55px;top:94.30px;width:6.00px;height:1px;background:#7aa35c;opacity:0.38"></div>
<div class="abs" style="left:938.30px;top:94.30px;width:3.75px;height:1px;background:#7aa35c;opacity:0.38"></div>
<div class="abs" style="left:942.80px;top:94.30px;width:4.50px;height:1px;background:#7aa35c;opacity:0.38"></div>
<div class="abs" style="left:948.05px;top:94.30px;width:2.25px;height:1px;background:#7aa35c;opacity:0.38"></div>
<div class="abs" style="left:951.05px;top:94.30px;width:3.00px;height:1px;background:#7aa35c;opacity:0.38"></div>
<div class="abs" style="left:954.80px;top:94.30px;width:3.00px;height:1px;background:#7aa35c;opacity:0.38"></div>
<div class="abs" style="left:958.55px;top:94.30px;width:6.00px;height:1px;background:#7aa35c;opacity:0.38"></div>
<div class="abs" style="left:929.30px;top:95.82px;width:1.50px;height:1px;background:#7aa35c;opacity:0.38"></div>
<div class="abs" style="left:931.55px;top:95.82px;width:4.50px;height:1px;background:#7aa35c;opacity:0.38"></div>
<div class="abs" style="left:936.80px;top:95.82px;width:3.75px;height:1px;background:#7aa35c;opacity:0.38"></div>
<div class="abs" style="left:941.30px;top:95.82px;width:3.00px;height:1px;background:#7aa35c;opacity:0.38"></div>
<div class="abs" style="left:945.05px;top:95.82px;width:6.00px;height:1px;background:#7aa35c;opacity:0.38"></div>
<div class="abs" style="left:951.80px;top:95.82px;width:3.00px;height:1px;background:#7aa35c;opacity:0.38"></div>
<div class="abs" style="left:955.55px;top:95.82px;width:3.75px;height:1px;background:#7aa35c;opacity:0.38"></div>
<div class="abs" style="left:960.05px;top:95.82px;width:3.00px;height:1px;background:#7aa35c;opacity:0.38"></div>
<div class="abs" style="left:963.80px;top:95.82px;width:2.25px;height:1px;background:#7aa35c;opacity:0.38"></div>
<div class="abs" style="left:966.80px;top:95.82px;width:5.25px;height:1px;background:#7aa35c;opacity:0.38"></div>
<div class="abs" style="left:972.80px;top:95.82px;width:4.50px;height:1px;background:#7aa35c;opacity:0.38"></div>
<div class="abs" style="left:978.05px;top:95.82px;width:3.75px;height:1px;background:#7aa35c;opacity:0.38"></div>
<div class="abs" style="left:929.30px;top:97.34px;width:1.50px;height:1px;background:#7aa35c;opacity:0.38"></div>
<div class="abs" style="left:931.55px;top:97.34px;width:3.00px;height:1px;background:#7aa35c;opacity:0.38"></div>
<div class="abs" style="left:935.30px;top:97.34px;width:3.75px;height:1px;background:#7aa35c;opacity:0.38"></div>
<div class="abs" style="left:939.80px;top:97.34px;width:1.50px;height:1px;background:#7aa35c;opacity:0.38"></div>
<div class="abs" style="left:942.05px;top:97.34px;width:3.00px;height:1px;background:#7aa35c;opacity:0.38"></div>
<div class="abs" style="left:945.80px;top:97.34px;width:1.50px;height:1px;background:#7aa35c;opacity:0.38"></div>
<div class="abs" style="left:948.05px;top:97.34px;width:3.00px;height:1px;background:#7aa35c;opacity:0.38"></div>
<div class="abs" style="left:951.80px;top:97.34px;width:2.25px;height:1px;background:#7aa35c;opacity:0.38"></div>
<div class="abs" style="left:954.80px;top:97.34px;width:2.25px;height:1px;background:#7aa35c;opacity:0.38"></div>
<div class="abs" style="left:957.80px;top:97.34px;width:3.75px;height:1px;background:#7aa35c;opacity:0.38"></div>
<div class="abs" style="left:962.30px;top:97.34px;width:3.00px;height:1px;background:#7aa35c;opacity:0.38"></div>
<div class="abs" style="left:966.05px;top:97.34px;width:4.50px;height:1px;background:#7aa35c;opacity:0.38"></div>
<div class="abs" style="left:971.30px;top:97.34px;width:7.50px;height:1px;background:#7aa35c;opacity:0.38"></div>
<div class="abs" style="left:929.30px;top:98.86px;width:6.00px;height:1px;background:#5a9fd4;opacity:0.38"></div>
<div class="abs" style="left:936.05px;top:98.86px;width:15.00px;height:1px;background:#c9cad7;opacity:0.38"></div>
<div class="abs" style="left:951.05px;top:98.86px;width:0.75px;height:1px;background:#c26fc9;opacity:0.38"></div>
<div class="abs" style="left:951.80px;top:98.86px;width:5.25px;height:1px;background:#5a9fd4;opacity:0.38"></div>
<div class="abs" style="left:957.80px;top:98.86px;width:8.25px;height:1px;background:#c9cad7;opacity:0.38"></div>
<div class="abs" style="left:966.05px;top:98.86px;width:0.75px;height:1px;background:#c26fc9;opacity:0.38"></div>
<div class="abs" style="left:967.55px;top:98.86px;width:4.50px;height:1px;background:#3ba66b;opacity:0.38"></div>
<div class="abs" style="left:972.80px;top:98.86px;width:3.00px;height:1px;background:#3ba66b;opacity:0.38"></div>
<div class="abs" style="left:976.55px;top:98.86px;width:5.25px;height:1px;background:#3ba66b;opacity:0.38"></div>
<div class="abs" style="left:982.55px;top:98.86px;width:0.75px;height:1px;background:#c26fc9;opacity:0.38"></div>
<div class="abs" style="left:983.30px;top:98.86px;width:3.00px;height:1px;background:#5a9fd4;opacity:0.38"></div>
<div class="abs" style="left:986.30px;top:98.86px;width:0.75px;height:1px;background:#c26fc9;opacity:0.38"></div>
<div class="abs" style="left:987.80px;top:98.86px;width:0.75px;height:1px;background:#c26fc9;opacity:0.38"></div>
<div class="abs" style="left:932.30px;top:100.38px;width:4.50px;height:1px;background:#3ba66b;opacity:0.38"></div>
<div class="abs" style="left:937.55px;top:100.38px;width:12.00px;height:1px;background:#c9cad7;opacity:0.38"></div>
<div class="abs" style="left:949.55px;top:100.38px;width:0.75px;height:1px;background:#c26fc9;opacity:0.38"></div>
<div class="abs" style="left:950.30px;top:100.38px;width:8.25px;height:1px;background:#c9cad7;opacity:0.38"></div>
<div class="abs" style="left:958.55px;top:100.38px;width:0.75px;height:1px;background:#c26fc9;opacity:0.38"></div>
<div class="abs" style="left:959.30px;top:100.38px;width:0.75px;height:1px;background:#c9cad7;opacity:0.38"></div>
<div class="abs" style="left:929.30px;top:101.90px;width:0.75px;height:1px;background:#c26fc9;opacity:0.38"></div>
<div class="abs" style="left:926.30px;top:103.42px;width:0.75px;height:1px;background:#c26fc9;opacity:0.38"></div>
<!-- terminal -->
<div class="abs" style="left:269px;top:522px;width:753px;height:1px;background:#1f2030"></div>
<div class="abs" style="left:269px;top:523px;width:753px;height:26.4px;background:#2a2c3f;border-top:1px solid #30334a"></div>
<svg class="abs" style="left:274px;top:532px" width="10" height="10" viewBox="0 0 10 10"><path d="M1.5 1 L5 4.2 L8.5 1 M1.5 5.5 L5 8.7 L8.5 5.5" stroke="#b3b4ca" stroke-width="1.3" fill="none"/></svg>
<div class="abs" style="left:619px;top:530px;width:12px;height:12px;border-radius:2px;border:1px solid #44465c;background:#2a2c3f"></div>
<svg class="abs" style="left:769.5px;top:530.8px" width="12" height="12" viewBox="0 0 12 12"><circle cx="4.8" cy="4.8" r="3.6" stroke="#c8c9d6" stroke-width="1.4" fill="none"/><path d="M7.5 7.5 L10.8 10.8" stroke="#c8c9d6" stroke-width="1.5"/></svg>
<div class="abs" style="left:787px;top:523px;width:210px;height:26px;background:#353849;border-radius:2px"></div>
<svg class="abs" style="left:1005px;top:530px" width="12" height="12" viewBox="0 0 12 12"><circle cx="6" cy="6" r="4.6" stroke="#c8c9d6" stroke-width="1.4" fill="none"/><path d="M2.8 2.8 L9.2 9.2" stroke="#c8c9d6" stroke-width="1.4"/></svg>
<div class="txt" style="left:330px;top:579.6px;font-family:'Liberation Mono',monospace;font-size:9.1px;letter-spacing:-0.02px;line-height:12px;color:#c8c9d6">[block:1 txIndex:0] from: 0xf39...92266 to: VendingMachine.(constructor) value: 0 wei data: 0x608...e0033</div>
<div class="abs" style="left:923.6px;top:579.5px;width:41.8px;height:10px;border-radius:2px;background:#0e7cb0"></div>
<div class="abs" style="left:1010px;top:562px;width:6px;height:30px;border-radius:3px;background:#44465a"></div>

<div class="txt" style="left:413.80px;top:8.40px;font-size:10.3px;line-height:10.3px;color:#a9aabe;letter-spacing:-0.400px">Home</div>
<div class="txt" style="left:482.30px;top:7.10px;font-size:10.6px;line-height:10.6px;color:#e4e5ed;letter-spacing:-0.044px">vending-machine-contract.sol</div>
<div class="txt" style="left:594.60px;top:531.80px;font-size:10.4px;line-height:10.4px;color:#c8c9d6">0</div>
<div class="txt" style="left:636.50px;top:531.00px;font-size:10.6px;line-height:10.6px;color:#5d5f75;letter-spacing:-0.052px">Listen on all transactions</div>
<div class="txt" style="left:796.80px;top:531.80px;font-size:11.0px;line-height:11.0px;color:#a3a4b8;letter-spacing:0.032px">Filter with transaction hash or address</div>
<div class="txt" style="left:299.50px;top:549.80px;font-size:8.4px;line-height:8.4px;color:#c8c9d6;font-family:'Liberation Mono',monospace;letter-spacing:-0.069px">creation of VendingMachine pending...</div>
<div class="txt" style="left:814.50px;top:223.20px;font-size:8.2px;line-height:8.2px;color:#a3a4b8;letter-spacing:0.114px">2829 gas</div>
<!-- right panel -->
<svg class="abs" style="left:1206px;top:8.4px" width="11" height="10" viewBox="0 0 11 10"><path d="M1.5 5.2 L4.2 7.8 L9.5 2" stroke="#32ba89" stroke-width="1.6" fill="none"/></svg>
<svg class="abs" style="left:1228px;top:9px" width="7" height="10" viewBox="0 0 7 10"><path d="M1.5 1 L5.5 5 L1.5 9" stroke="#a2a3bd" stroke-width="1.3" fill="none"/></svg>
<svg class="abs" style="left:1243px;top:8.2px" width="12" height="10.5" viewBox="0 0 12 10.5"><rect x="0.7" y="0.7" width="10.6" height="9.1" rx="1.6" stroke="#a9aac2" stroke-width="1.4" fill="none"/><line x1="4" y1="1" x2="4" y2="9.5" stroke="#a9aac2" stroke-width="1.4"/></svg>
<div class="abs" style="left:1266px;top:25px;width:4px;height:558px;background:#44465a;border-radius:2px 0 0 0"></div>
<svg class="abs" style="left:1040px;top:100px" width="5" height="8" viewBox="0 0 5 8"><path d="M1 1 L4 4 L1 7" stroke="#9a9bb0" stroke-width="1.1" fill="none"/></svg>

<div class="abs" style="left:1035px;top:151.5px;width:219.5px;height:1px;background:#3d3f55"></div>
<div class="abs" style="left:1035px;top:386.0px;width:219.5px;height:1px;background:#3d3f55"></div>
<div class="abs" style="left:1035px;top:559.1px;width:219.5px;height:1px;background:#3d3f55"></div>
<svg class="abs" style="left:1034.4px;top:165.0px" width="6" height="9" viewBox="0 0 6 9"><path d="M1 0.5 L4.8 4.2 L1 7.9" stroke="#a9aabe" stroke-width="1.5" fill="none"/></svg>
<svg class="abs" style="left:1237.8px;top:159.4px" width="16.5" height="16.5" viewBox="0 0 17 17"><circle cx="8.5" cy="8.5" r="8.3" fill="#a2a3bd"/><path d="M6.3 4.3 L12.7 8.5 L6.3 12.7 Z" fill="#222336" stroke="#222336" stroke-width="0.6" stroke-linejoin="round"/></svg>
<svg class="abs" style="left:1034.4px;top:195.3px" width="6" height="9" viewBox="0 0 6 9"><path d="M1 0.5 L4.8 4.2 L1 7.9" stroke="#a9aabe" stroke-width="1.5" fill="none"/></svg>
<svg class="abs" style="left:1237.8px;top:189.8px" width="16.5" height="16.5" viewBox="0 0 17 17"><circle cx="8.5" cy="8.5" r="8.3" fill="#a2a3bd"/><path d="M6.3 4.3 L12.7 8.5 L6.3 12.7 Z" fill="#222336" stroke="#222336" stroke-width="0.6" stroke-linejoin="round"/></svg>
<svg class="abs" style="left:1034.4px;top:225.7px" width="6" height="9" viewBox="0 0 6 9"><path d="M1 0.5 L4.8 4.2 L1 7.9" stroke="#a9aabe" stroke-width="1.5" fill="none"/></svg>
<svg class="abs" style="left:1237.8px;top:220.2px" width="16.5" height="16.5" viewBox="0 0 17 17"><circle cx="8.5" cy="8.5" r="8.3" fill="#a2a3bd"/><path d="M6.3 4.3 L12.7 8.5 L6.3 12.7 Z" fill="#222336" stroke="#222336" stroke-width="0.6" stroke-linejoin="round"/></svg>
<svg class="abs" style="left:1034.4px;top:256.0px" width="6" height="9" viewBox="0 0 6 9"><path d="M1 0.5 L4.8 4.2 L1 7.9" stroke="#a9aabe" stroke-width="1.5" fill="none"/></svg>
<svg class="abs" style="left:1237.8px;top:250.4px" width="16.5" height="16.5" viewBox="0 0 17 17"><circle cx="8.5" cy="8.5" r="8.3" fill="#a2a3bd"/><path d="M6.3 4.3 L12.7 8.5 L6.3 12.7 Z" fill="#222336" stroke="#222336" stroke-width="0.6" stroke-linejoin="round"/></svg>
<svg class="abs" style="left:1034.4px;top:286.3px" width="6" height="9" viewBox="0 0 6 9"><path d="M1 0.5 L4.8 4.2 L1 7.9" stroke="#a9aabe" stroke-width="1.5" fill="none"/></svg>
<svg class="abs" style="left:1237.8px;top:280.8px" width="16.5" height="16.5" viewBox="0 0 17 17"><circle cx="8.5" cy="8.5" r="8.3" fill="#a2a3bd"/><path d="M6.3 4.3 L12.7 8.5 L6.3 12.7 Z" fill="#222336" stroke="#222336" stroke-width="0.6" stroke-linejoin="round"/></svg>
<svg class="abs" style="left:1034.4px;top:316.6px" width="6" height="9" viewBox="0 0 6 9"><path d="M1 0.5 L4.8 4.2 L1 7.9" stroke="#a9aabe" stroke-width="1.5" fill="none"/></svg>
<svg class="abs" style="left:1237.8px;top:311.1px" width="16.5" height="16.5" viewBox="0 0 17 17"><circle cx="8.5" cy="8.5" r="8.3" fill="#a2a3bd"/><path d="M6.3 4.3 L12.7 8.5 L6.3 12.7 Z" fill="#222336" stroke="#222336" stroke-width="0.6" stroke-linejoin="round"/></svg>
<svg class="abs" style="left:1034.4px;top:347.2px" width="6" height="9" viewBox="0 0 6 9"><path d="M1 0.5 L4.8 4.2 L1 7.9" stroke="#a9aabe" stroke-width="1.5" fill="none"/></svg>
<svg class="abs" style="left:1237.8px;top:341.6px" width="16.5" height="16.5" viewBox="0 0 17 17"><circle cx="8.5" cy="8.5" r="8.3" fill="#a2a3bd"/><path d="M6.3 4.3 L12.7 8.5 L6.3 12.7 Z" fill="#222336" stroke="#222336" stroke-width="0.6" stroke-linejoin="round"/></svg>
<svg class="abs" style="left:1034.4px;top:398.6px" width="6" height="9" viewBox="0 0 6 9"><path d="M1 0.5 L4.8 4.2 L1 7.9" stroke="#a9aabe" stroke-width="1.5" fill="none"/></svg>
<svg class="abs" style="left:1237.8px;top:393.1px" width="16.5" height="16.5" viewBox="0 0 17 17"><circle cx="8.5" cy="8.5" r="8.3" fill="#a2a3bd"/><path d="M6.3 4.3 L12.7 8.5 L6.3 12.7 Z" fill="#222336" stroke="#222336" stroke-width="0.6" stroke-linejoin="round"/></svg>
<svg class="abs" style="left:1034.4px;top:429.3px" width="6" height="9" viewBox="0 0 6 9"><path d="M1 0.5 L4.8 4.2 L1 7.9" stroke="#a9aabe" stroke-width="1.5" fill="none"/></svg>
<svg class="abs" style="left:1237.8px;top:423.8px" width="16.5" height="16.5" viewBox="0 0 17 17"><circle cx="8.5" cy="8.5" r="8.3" fill="#a2a3bd"/><path d="M6.3 4.3 L12.7 8.5 L6.3 12.7 Z" fill="#222336" stroke="#222336" stroke-width="0.6" stroke-linejoin="round"/></svg>
<svg class="abs" style="left:1034.4px;top:459.5px" width="6" height="9" viewBox="0 0 6 9"><path d="M1 0.5 L4.8 4.2 L1 7.9" stroke="#a9aabe" stroke-width="1.5" fill="none"/></svg>
<svg class="abs" style="left:1237.8px;top:453.9px" width="16.5" height="16.5" viewBox="0 0 17 17"><circle cx="8.5" cy="8.5" r="8.3" fill="#a2a3bd"/><path d="M6.3 4.3 L12.7 8.5 L6.3 12.7 Z" fill="#222336" stroke="#222336" stroke-width="0.6" stroke-linejoin="round"/></svg>
<svg class="abs" style="left:1034.4px;top:489.6px" width="6" height="9" viewBox="0 0 6 9"><path d="M1 0.5 L4.8 4.2 L1 7.9" stroke="#a9aabe" stroke-width="1.5" fill="none"/></svg>
<svg class="abs" style="left:1237.8px;top:484.1px" width="16.5" height="16.5" viewBox="0 0 17 17"><circle cx="8.5" cy="8.5" r="8.3" fill="#a2a3bd"/><path d="M6.3 4.3 L12.7 8.5 L6.3 12.7 Z" fill="#222336" stroke="#222336" stroke-width="0.6" stroke-linejoin="round"/></svg>
<svg class="abs" style="left:1034.4px;top:520.0px" width="6" height="9" viewBox="0 0 6 9"><path d="M1 0.5 L4.8 4.2 L1 7.9" stroke="#a9aabe" stroke-width="1.5" fill="none"/></svg>
<svg class="abs" style="left:1237.8px;top:514.5px" width="16.5" height="16.5" viewBox="0 0 17 17"><circle cx="8.5" cy="8.5" r="8.3" fill="#a2a3bd"/><path d="M6.3 4.3 L12.7 8.5 L6.3 12.7 Z" fill="#222336" stroke="#222336" stroke-width="0.6" stroke-linejoin="round"/></svg>
<svg class="abs" style="left:1034.4px;top:572.0px" width="6" height="9" viewBox="0 0 6 9"><path d="M1 0.5 L4.8 4.2 L1 7.9" stroke="#a9aabe" stroke-width="1.5" fill="none"/></svg>
<svg class="abs" style="left:1237.8px;top:566.5px" width="16.5" height="16.5" viewBox="0 0 17 17"><circle cx="8.5" cy="8.5" r="8.3" fill="#a2a3bd"/><path d="M6.3 4.3 L12.7 8.5 L6.3 12.7 Z" fill="#222336" stroke="#222336" stroke-width="0.6" stroke-linejoin="round"/></svg>
<div class="txt" style="left:1034.60px;top:8.10px;font-size:12.6px;line-height:12.6px;color:#e4e5ed;letter-spacing:-0.700px">LEARNETH</div>
<div class="txt" style="left:1035.60px;top:39.80px;font-size:10.9px;line-height:10.9px;color:#9a9bb0;letter-spacing:-0.271px">Tutorials from:</div>
<div class="txt" style="left:1035.60px;top:52.50px;font-size:15.2px;line-height:15.2px;color:#e4e5ed;letter-spacing:-0.270px">ethereum/remix-workshops</div>
<div class="txt" style="left:1034.60px;top:73.30px;font-size:10.6px;line-height:10.6px;color:#9a9bb0;letter-spacing:-0.208px">Date modified: 12/19/2024, 1:58:52 PM</div>
<div class="txt" style="left:1055.30px;top:100.10px;font-size:10.9px;line-height:10.9px;color:#9a9bb0;letter-spacing:-0.185px">Import another tutorial repo</div>
<div class="txt" style="left:1034.60px;top:139.90px;font-size:10.9px;line-height:10.9px;color:#9a9bb0;letter-spacing:-0.325px">Beginner:</div>
<div class="txt" style="left:1034.60px;top:373.80px;font-size:10.9px;line-height:10.9px;color:#9a9bb0;letter-spacing:-0.200px">Intermediate:</div>
<div class="txt" style="left:1035.60px;top:546.70px;font-size:10.9px;line-height:10.9px;color:#9a9bb0;letter-spacing:-0.487px">Advanced:</div>
<div class="txt" style="left:1043.40px;top:162.20px;font-size:13.1px;line-height:13.1px;color:#a9aabe;letter-spacing:-0.479px">Basics of Remix</div>
<div class="txt" style="left:1043.40px;top:192.50px;font-size:13.1px;line-height:13.1px;color:#a9aabe;letter-spacing:-0.350px">Hash Checker Tutorial</div>
<div class="txt" style="left:1043.40px;top:223.00px;font-size:13.1px;line-height:13.1px;color:#a9aabe;letter-spacing:-0.221px">Intro to Circom</div>
<div class="txt" style="left:1043.40px;top:253.10px;font-size:13.1px;line-height:13.1px;color:#a9aabe;letter-spacing:-0.257px">Multisig Wallet</div>
<div class="txt" style="left:1043.40px;top:283.50px;font-size:13.1px;line-height:13.1px;color:#a9aabe;letter-spacing:-0.343px">Solidity Beginner Course</div>
<div class="txt" style="left:1043.40px;top:313.60px;font-size:13.1px;line-height:13.1px;color:#a9aabe;letter-spacing:-0.454px">Solidity ERC20 Token Course</div>
<div class="txt" style="left:1043.40px;top:343.80px;font-size:13.1px;line-height:13.1px;color:#a9aabe;letter-spacing:-0.417px">Solidity NFT Course</div>
<div class="txt" style="left:1043.40px;top:395.90px;font-size:13.1px;line-height:13.1px;color:#a9aabe;letter-spacing:-0.326px">Basic use of web3.js</div>
<div class="txt" style="left:1043.40px;top:425.70px;font-size:13.1px;line-height:13.1px;color:#a9aabe;letter-spacing:-0.297px">Multichain Protocols with Axelar</div>
<div class="txt" style="left:1043.40px;top:456.40px;font-size:13.1px;line-height:13.1px;color:#a9aabe;letter-spacing:-0.279px">NFT Auction Contract</div>
<div class="txt" style="left:1043.40px;top:487.10px;font-size:13.1px;line-height:13.1px;color:#a9aabe;letter-spacing:-0.457px">Recorder</div>
<div class="txt" style="left:1043.40px;top:517.20px;font-size:13.1px;line-height:13.1px;color:#a9aabe;letter-spacing:-0.506px">Uniswap Swap Course</div>
<div class="txt" style="left:1044.40px;top:569.10px;font-size:13.1px;line-height:13.1px;color:#a9aabe;letter-spacing:-0.358px">All about Proxy Contracts</div>
</body></html>
